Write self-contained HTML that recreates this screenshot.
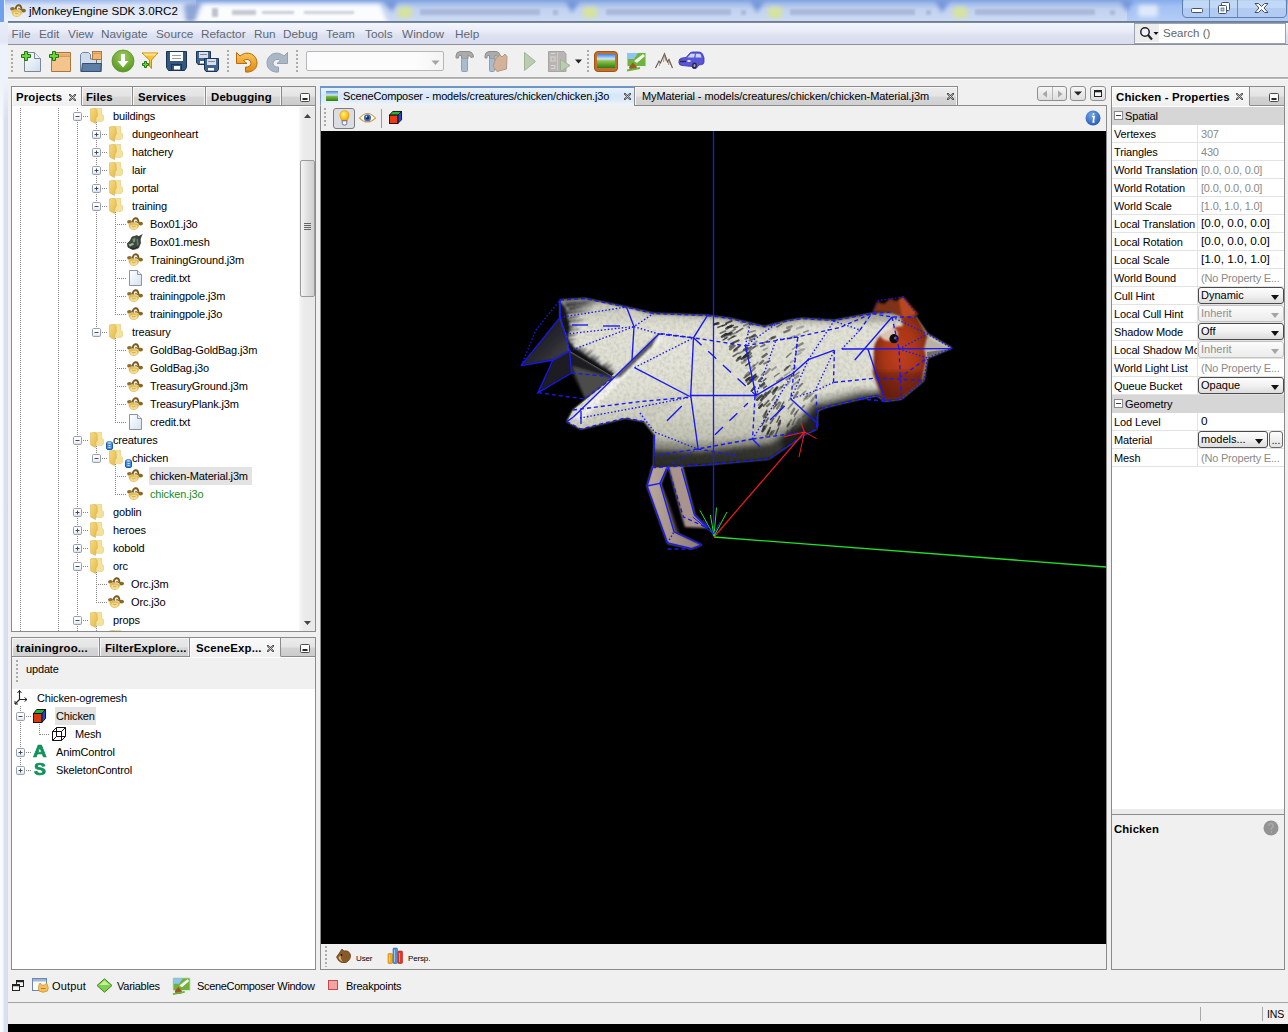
<!DOCTYPE html>
<html><head><meta charset="utf-8"><title>jMonkeyEngine SDK 3.0RC2</title>
<style>
*{box-sizing:border-box;margin:0;padding:0}
html,body{width:1288px;height:1032px;overflow:hidden}
body{position:relative;background:#f0f0f0;font-family:"Liberation Sans",sans-serif;font-size:11px;color:#000;letter-spacing:-0.15px}
.a{position:absolute}
.t{position:absolute;white-space:pre;line-height:14px;height:14px}
.b{font-weight:bold;letter-spacing:0.1px;font-size:11.4px}
svg{position:absolute;overflow:visible}
.panel{position:absolute;border:1px solid #8b8b8b;background:#fff}
.tab{position:absolute;top:0;height:19px;border-right:1px solid #8b8b8b;border-bottom:1px solid #8b8b8b;background:linear-gradient(#e9e9e9 0,#e4e4e4 50%,#d5d5d5 56%,#d1d1d1 100%);box-shadow:inset 1px 1px 0 #f7f7f7,inset -1px 0 0 #f4f4f4}
.tab.sel{background:linear-gradient(#fafafa,#f0f0f0);border-bottom:1px solid #f0f0f0;box-shadow:inset 1px 1px 0 #fff}
.tabrow{position:absolute;left:0;top:0;right:0;height:19px;background:linear-gradient(#ececec 0,#e4e4e4 50%,#d3d3d3 56%,#cccccc 100%);border-bottom:1px solid #8b8b8b}

#wl{left:0;top:22px;width:8px;height:1010px;background:linear-gradient(90deg,#fbfcff 0,#f4f7fd 3px,#dde2f2 4px,#d6dcef 8px)}
#title{left:0;top:0;width:1288px;height:22px;background:linear-gradient(#b9cdeb 0,#c7d7ef 30%,#d4e0f3 70%,#dfe7f5 100%);overflow:hidden}
#title .bl{position:absolute;filter:blur(3px);border-radius:4px}
#tline{left:8px;top:21px;width:1280px;height:2px;background:linear-gradient(#65758c,#8090a6)}
#menu{left:8px;top:23px;width:1280px;height:21px;background:linear-gradient(#f4f6fc 0,#e9ecf7 40%,#dde1f0 60%,#d9ddee 100%)}
#menu .t{top:4px;font-size:11.8px;color:#5f6877;letter-spacing:0;line-height:14px}
#mline{left:8px;top:44px;width:1280px;height:1px;background:#8c909a}
#tbar{left:8px;top:45px;width:1280px;height:33px;background:#f0f0f0}
#tbl1{left:8px;top:77px;width:1280px;height:2px;background:linear-gradient(#a5a5a5,#bdbdbd)}
#tbl2{left:8px;top:79px;width:1280px;height:1px;background:#fbfbfb}
.grip{position:absolute;width:2px;background-image:linear-gradient(#aaa 50%,transparent 50%);background-size:2px 4px}

.vd{position:absolute;width:1px;background-image:linear-gradient(#858585 50%,transparent 50%);background-size:1px 2px}
.hd{position:absolute;height:1px;background-image:linear-gradient(90deg,#858585 50%,transparent 50%);background-size:2px 1px}
#proj .t,#scene .t{font-size:11px}
.tabt{position:absolute;top:3px;white-space:pre;font-weight:bold;font-size:11.4px;letter-spacing:0.15px;line-height:14px}
.sbar{position:absolute;background:linear-gradient(90deg,#f6f6f6,#ebebeb 30%,#e9e9e9)}
.thumb{position:absolute;border:1px solid #9a9a9a;border-radius:2px;background:linear-gradient(90deg,#f4f4f4,#dcdcdc 60%,#cfcfcf)}

#ed{left:320px;top:105px;width:787px;height:865px;border:1px solid #8b8b8b;background:#f0f0f0}
#view{left:321px;top:131px;width:785px;height:813px;background:#000;overflow:hidden}
.etab{position:absolute;top:86px;height:20px;border:1px solid #8b8b8b}
.etxt{position:absolute;top:2px;white-space:pre;font-size:11px;line-height:14px;letter-spacing:-0.16px}
.nbtn{position:absolute;top:86px;height:15px;border:1px solid #8e8e8e;border-radius:3px;background:linear-gradient(#f6f6f6,#dedede)}

#props .pn{position:absolute;left:2px;white-space:pre;font-size:11px;line-height:14px;width:83px;overflow:hidden;letter-spacing:-0.12px;height:14px}
#props .pv{position:absolute;left:89px;white-space:pre;font-size:11px;line-height:14px;color:#8a8a8a;letter-spacing:-0.2px}
#props .pv.e{color:#000;font-size:11.8px;letter-spacing:0;left:89px}
#props .ln{position:absolute;left:0;width:172px;height:1px;background:#e2e2e2}
.cmb{position:absolute;left:86px;width:86px;height:17px;border:1px solid #4a4a4a;border-radius:3px;background:linear-gradient(#fdfdfd 0,#f1f1f1 50%,#dcdcdc 100%);font-size:11px;line-height:14px;padding-left:2px;white-space:pre;letter-spacing:0;overflow:hidden}
.cmb.dis{border-color:#c2c2c2;color:#8e8e8e;background:linear-gradient(#fbfbfb,#ececec)}
.cmb i{position:absolute;right:4px;top:7px;width:0;height:0;border:4px solid transparent;border-top:5px solid #111;border-bottom:0}
.cmb.dis i{border-top-color:#a5a5a5}

#bline{left:8px;top:1002px;width:1280px;height:1px;background:#a3a3a3}
#bblack{left:8px;top:1024px;width:1280px;height:8px;background:#000}
.bt{position:absolute;white-space:pre;font-size:11px;top:979px;line-height:14px;letter-spacing:-0.25px}
</style></head>
<body>
<svg width="0" height="0" style="position:absolute">
<defs>
<linearGradient id="gFold" x1="0" y1="0" x2="1" y2="1"><stop offset="0" stop-color="#f6dc80"/><stop offset="1" stop-color="#e4b848"/></linearGradient>
<linearGradient id="gBox" x1="0" y1="0" x2="0" y2="1"><stop offset="0.5" stop-color="#ffffff"/><stop offset="1" stop-color="#d9dde4"/></linearGradient><linearGradient id="gFold2" x1="0" y1="0" x2="0" y2="1"><stop offset="0" stop-color="#fff3c0"/><stop offset="1" stop-color="#f1cf6a"/></linearGradient>
<linearGradient id="gPage" x1="0" y1="0" x2="1" y2="1"><stop offset="0" stop-color="#ffffff"/><stop offset="1" stop-color="#d5e2f1"/></linearGradient>
<radialGradient id="gMonk" cx="0.45" cy="0.4" r="0.6"><stop offset="0" stop-color="#f6d873"/><stop offset="1" stop-color="#c98d2a"/></radialGradient>
<symbol id="folder" viewBox="0 0 14 16">
  <path d="M5 0.400 L11.500 0.300 L11.800 6 L13.800 8 L13.600 12 L12 13.600 L6 13.200Z" fill="#f5e29a" stroke="#dcc06a" stroke-width="0.500"/>
  <path d="M0.300 1 L4.500 0.300 L7 2 L7.400 8 L5.900 10 L5.500 15.600 L0.700 13Z" fill="url(#gFold)" stroke="#d0a844" stroke-width="0.500"/>
</symbol>
<symbol id="page" viewBox="0 0 16 16">
  <path d="M2.5 0.5 L10.5 0.5 L14.5 4.5 L14.5 15.5 L2.5 15.5Z" fill="url(#gPage)" stroke="#8a94a3" stroke-width="1"/>
  <path d="M10.5 0.5 L10.5 4.5 L14.5 4.5" fill="#eef3f9" stroke="#8a94a3" stroke-width="1"/>
</symbol>
<symbol id="monkey" viewBox="0 0 16 13">
  <ellipse cx="2.5" cy="4.8" rx="2.4" ry="1.9" fill="#8c6c34"/>
  <ellipse cx="13.6" cy="6.6" rx="2.4" ry="1.9" fill="#8a6626"/>
  <path d="M4.8 5.5 C4.8 1.8 7 0.3 8.8 0.3 C11 0.3 12.6 2.2 12.4 6 Z" fill="#7a5a22"/>
  <ellipse cx="8.6" cy="4.2" rx="1.7" ry="2" fill="#fdf8e4"/>
  <ellipse cx="9" cy="4.7" rx="0.7" ry="1" fill="#5a4018"/>
  <path d="M1.6 7 C1.8 5.5 4 5.6 6.5 6 C9 6.2 11.5 6.2 12 7.6 C12.4 10.5 9.8 12.9 6.8 12.9 C3.8 12.9 1.3 10.2 1.6 7Z" fill="#e3bd4e"/>
  <ellipse cx="6.8" cy="10" rx="3.6" ry="2.3" fill="#f0da96"/>
  <path d="M5 9.200 Q6.800 10 8.600 9.200" stroke="#b48a30" stroke-width="0.600" fill="none"/>
</symbol>
<symbol id="meshico" viewBox="0 0 16 16">
  <path d="M11.3 2.200 L15.800 0.100 L13.300 5.500Z" fill="#3c4a3e"/>
  <path d="M5 3 L10 1.500 L13 3.500 L13.600 9 L11.500 14 L6 15.800 L1 13.200 L0.200 9.500 L3 7Z" fill="#3a473b" stroke="#232c24" stroke-width="0.600"/>
  <path d="M1.500 10.500 L6 8.700 L7 10.500 L3 12.500Z" fill="#a9bca6" opacity="0.900"/>
  <path d="M5.500 5 L8.500 3.500 L8 8 L6 8.200Z" fill="#7c8f7c"/>
  <path d="M9.500 5 L11 4.500 L11.500 11 L10 12Z" fill="#67786a"/>
  <path d="M3 14 L8 14.500 L11 12.500" stroke="#1a211b" stroke-width="0.800" fill="none"/>
</symbol>
<symbol id="plusbox" viewBox="0 0 9 9">
  <rect x="0.5" y="0.5" width="8" height="8" rx="1.2" fill="url(#gBox)" stroke="#979fad"/>
  <path d="M2.5 4.5H6.5M4.5 2.5V6.5" stroke="#3b4a6b" stroke-width="1"/>
</symbol>
<symbol id="minusbox" viewBox="0 0 9 9">
  <rect x="0.5" y="0.5" width="8" height="8" rx="1.2" fill="url(#gBox)" stroke="#979fad"/>
  <path d="M2.5 4.5H6.5" stroke="#3b4a6b" stroke-width="1"/>
</symbol>
<symbol id="closex" viewBox="0 0 8 8">
  <path d="M1 1 L7 7 M7 1 L1 7" stroke="#4a4a4a" stroke-width="2.400" stroke-linecap="round"/>
  <path d="M1.500 1.500 L6.500 6.500 M6.500 1.500 L1.500 6.500" stroke="#f4f4f4" stroke-width="0.700"/>
</symbol>
<symbol id="minbtn" viewBox="0 0 10 9">
  <rect x="0.5" y="0.5" width="9" height="8" rx="1" fill="#fafafa" stroke="#4a4a4a"/>
  <rect x="2.5" y="5" width="5" height="2" fill="#2a2a2a"/>
</symbol>
</defs></svg>
<div class="a" id="title">
<svg style="left:0;top:0" width="1288" height="22" viewBox="0 0 1288 22">
<defs><linearGradient id="tg0" x1="0" y1="0" x2="0" y2="1"><stop offset="0" stop-color="#7fa2e0"/><stop offset="0.18" stop-color="#a4bdea"/><stop offset="0.4" stop-color="#c0d1f0"/><stop offset="1" stop-color="#cedbf3"/></linearGradient>
<linearGradient id="tg1" x1="0" y1="0" x2="0" y2="1"><stop offset="0" stop-color="#9dbaee"/><stop offset="0.25" stop-color="#d9e3f6"/><stop offset="1" stop-color="#eef2fb"/></linearGradient>
<linearGradient id="tg2" x1="0" y1="0" x2="0" y2="1"><stop offset="0" stop-color="#86abec"/><stop offset="0.3" stop-color="#a3c1f3"/><stop offset="1" stop-color="#b4cdf6"/></linearGradient>
<filter id="tbl"><feGaussianBlur stdDeviation="2.2"/></filter><filter id="tbl2"><feGaussianBlur stdDeviation="1.2"/></filter></defs>
<rect width="1288" height="22" fill="url(#tg0)"/>
<rect x="0" y="0" width="196" height="22" fill="url(#tg1)"/>
<rect x="1127" y="0" width="161" height="22" fill="url(#tg2)"/>
<g filter="url(#tbl)">
<path d="M184 4 L200 2 L196 22 L186 22Z" fill="#8ea6d6"/>
<path d="M203 4 H380 L388 24 H194Z" fill="#fbfcfe"/>
<path d="M383 0 L398 0 L392 12Z M565 0 L580 0 L572 13Z M750 0 L765 0 L757 13Z M935 0 L950 0 L942 13Z M1120 0 L1134 0 L1127 12Z" fill="#7496da"/>
<rect x="398" y="7" width="14" height="11" rx="3" fill="#d6e39c"/><rect x="583" y="7" width="14" height="11" rx="3" fill="#d6e39c"/><rect x="768" y="7" width="14" height="11" rx="3" fill="#d6e39c"/><rect x="953" y="7" width="14" height="11" rx="3" fill="#d6e39c"/>
<rect x="1138" y="5" width="20" height="12" rx="3" fill="#dfe9fb"/>
</g>
<g filter="url(#tbl2)" fill="#aab9da">
<rect x="232" y="10" width="24" height="5" fill="#c6c9d2"/><rect x="262" y="11" width="32" height="3" fill="#c9ccd6"/><rect x="304" y="11" width="50" height="3" fill="#cdd0d8"/><rect x="212" y="8" width="6" height="9" fill="#c0c3cc"/>
<rect x="420" y="9" width="120" height="6"/><rect x="553" y="10" width="5" height="5"/>
<rect x="606" y="9" width="125" height="6"/><rect x="741" y="10" width="5" height="5"/>
<rect x="790" y="9" width="125" height="6"/><rect x="926" y="10" width="5" height="5"/>
<rect x="975" y="9" width="120" height="6"/><rect x="1110" y="10" width="5" height="5"/>
</g>
<rect x="0" y="0" width="4" height="22" fill="#6fa2ee"/><rect x="4" y="0" width="1" height="22" fill="#e8f0fc"/>
</svg>
</div>
<div class="a" id="wl"></div><div class="a" style="left:0;top:22px;width:8px;height:100px;background:linear-gradient(#e9edf9 0,#e3e7f5 20px,#eef2fa 24px,#eef2fa 60px,rgba(238,242,250,0) 100px)"></div>
<svg style="left:10px;top:4px" width="16" height="13"><use href="#monkey"/></svg>
<div class="t" style="left:29px;top:4px;font-size:11.6px;letter-spacing:0;color:#000">jMonkeyEngine SDK 3.0RC2</div>
<svg style="left:1182px;top:0" width="105" height="18" viewBox="0 0 105 18">
<path d="M0.500 0 V13 Q0.500 17.500 5 17.500 H100 Q104.500 17.500 104.500 13 V0Z" fill="#b2cbf3" stroke="#5f7fae"/>
<path d="M1.500 0 V8 H103.500 V0Z" fill="#c6dbf8" opacity="0.800"/>
<path d="M27.500 0V17M55.500 0V17" stroke="#6f8cb8"/>
<rect x="9.500" y="8.500" width="11" height="4" rx="1" fill="#fff" stroke="#44506a"/>
<rect x="39.500" y="2.500" width="8" height="8" rx="1" fill="#fff" stroke="#44506a"/><rect x="36.500" y="5.500" width="8" height="8" rx="1" fill="#fff" stroke="#44506a"/><rect x="39" y="8" width="3" height="3" fill="#b5cdf2" stroke="#44506a" stroke-width="0.600"/>
<path d="M73 3.500 L76.500 3.500 L79.500 6.500 L82.500 3.500 L86 3.500 L82 8 L86 12.500 L82.500 12.500 L79.500 9.500 L76.500 12.500 L73 12.500 L77 8Z" fill="#fff" stroke="#44506a"/>
</svg>
<div class="a" id="tline"></div>
<div class="a" id="menu">
<div class="t" style="left:3.5px">File</div>
<div class="t" style="left:31px">Edit</div>
<div class="t" style="left:60px">View</div>
<div class="t" style="left:93px">Navigate</div>
<div class="t" style="left:148px">Source</div>
<div class="t" style="left:193px">Refactor</div>
<div class="t" style="left:246px">Run</div>
<div class="t" style="left:275px">Debug</div>
<div class="t" style="left:318px">Team</div>
<div class="t" style="left:357px">Tools</div>
<div class="t" style="left:394px">Window</div>
<div class="t" style="left:447px">Help</div>
</div>
<div class="a" style="left:1134px;top:23px;width:152px;height:21px;border:1px solid #9aa3b5;background:#fff">
<div class="a" style="left:0;top:0;width:24px;height:18px;background:#ececec"></div>
<svg style="left:4px;top:2px" width="20" height="15" viewBox="0 0 20 15"><circle cx="6" cy="6" r="4.200" fill="#eef4fb" stroke="#222" stroke-width="1.500"/><path d="M9 9 L13 13.500" stroke="#222" stroke-width="2.200"/><path d="M14.500 6 H19.500 L17 9Z" fill="#111"/></svg>
<div class="t" style="left:28px;top:2px;font-size:11.5px;color:#666;letter-spacing:0">Search ()</div></div>
<div class="a" id="mline"></div><div class="a" id="tbar"></div><div class="a" id="tbl1"></div><div class="a" id="tbl2"></div>
<div class="grip" style="left:11px;top:50px;height:23px"></div>
<div class="grip" style="left:227px;top:50px;height:23px"></div>
<div class="grip" style="left:296px;top:50px;height:23px"></div>
<div class="grip" style="left:587px;top:50px;height:23px"></div>

<svg style="left:20px;top:50px" width="24" height="24" viewBox="0 0 24 24">
 <defs><linearGradient id="tgp" x1="0" y1="0" x2="1" y2="1"><stop offset="0" stop-color="#fff"/><stop offset="1" stop-color="#cfdcec"/></linearGradient></defs>
 <path d="M4.500 2.500 H14.500 L20.500 8.500 V21.500 H4.500Z" fill="url(#tgp)" stroke="#7d8794"/>
 <path d="M14.500 2.500 V8.500 H20.500" fill="#e9eff7" stroke="#7d8794"/>
 <path d="M4.500 1.500 H7.500 V4.500 H10.500 V7.500 H7.500 V10.500 H4.500 V7.500 H1.500 V4.500 H4.500Z" fill="#6fd23c" stroke="#1f7a12"/>
</svg>
<svg style="left:48px;top:50px" width="24" height="24" viewBox="0 0 24 24">
 <path d="M3.500 4.500 L5.500 2.500 H22.500 V21.500 H3.500Z" fill="#f3c48d" stroke="#a8763f"/>
 <path d="M3.500 6.500 H22.500" stroke="#d59a58" />
 <path d="M4 3.500 H22 V6 H4Z" fill="#e9ae6c"/>
 <path d="M4.500 1.500 H7.500 V4.500 H10.500 V7.500 H7.500 V10.500 H4.500 V7.500 H1.500 V4.500 H4.500Z" fill="#6fd23c" stroke="#1f7a12"/>
</svg>
<svg style="left:79px;top:50px" width="24" height="24" viewBox="0 0 24 24">
 <path d="M1.500 21.500 V4.500 L3.500 2.500 H9.500 L11.500 4.500 V9 H22.500 V21.500Z" fill="#cfdcea" stroke="#6e86a2"/>
 <rect x="13.500" y="1.500" width="9" height="8" fill="#f0b672" stroke="#a8763f"/>
 <path d="M13.500 3.500 H22.500" stroke="#d59a58"/>
 <path d="M3.500 13.500 H22.500 L21.500 21.500 H2.500Z" fill="#5c7ea5" stroke="#35506f"/>
 <path d="M17.500 9.500 V13" stroke="#6e6e6e"/>
</svg>
<svg style="left:111px;top:49px" width="24" height="24" viewBox="0 0 24 24">
 <defs><radialGradient id="tgd" cx="0.5" cy="0.3" r="0.8"><stop offset="0" stop-color="#9ccb5a"/><stop offset="1" stop-color="#4f8f1c"/></radialGradient></defs>
 <circle cx="12" cy="12" r="11" fill="url(#tgd)" stroke="#5c9628" stroke-width="0.8"/>
 <path d="M10 5 H14 V12 H17.500 L12 18.500 L6.500 12 H10Z" fill="#fff"/>
</svg>
<svg style="left:140px;top:51px" width="20" height="20" viewBox="0 0 20 20">
 <path d="M2 2 H18 L11.500 9 V17.500 L9.500 15 V9Z" fill="#f6c435" stroke="#c98a10"/>
 <path d="M3 2.500 H17 L15 4.500 H5Z" fill="#fbe38a"/>
 <path d="M4.500 10.500 H6.500 V12.500 H8.500 V14.500 H6.500 V16.500 H4.500 V14.500 H2.500 V12.500 H4.500Z" fill="#6fd23c" stroke="#1f7a12"/>
</svg>
<svg style="left:165px;top:50px" width="24" height="22" viewBox="0 0 24 22">
 <path d="M1.500 1.500 H21.500 V17.500 L19.500 20.500 H3.500 L1.500 17.500Z" fill="#35577f" stroke="#1c3454"/>
 <rect x="5" y="2" width="13" height="9" fill="#fff"/>
 <path d="M7 5.500 H16 M7 8.500 H16" stroke="#9a9a9a"/>
 <rect x="6.500" y="14.500" width="10" height="6" fill="#35577f" stroke="#1c3454"/>
 <rect x="9" y="16" width="6" height="3.500" fill="#fff"/>
</svg>
<svg style="left:195px;top:50px" width="24" height="24" viewBox="0 0 24 24">
 <g><path d="M1.500 1.500 H15.500 V12.500 L14 14.500 H3 L1.500 12.500Z" fill="#41648f" stroke="#1c3454"/><rect x="4" y="2" width="9" height="6" fill="#d7e0ec"/><path d="M5 4.500H12" stroke="#889"/><rect x="5" y="11" width="6" height="2.500" fill="#fff"/></g>
 <g transform="translate(8,7)"><path d="M1.500 1.500 H15.500 V12.500 L14 14.500 H3 L1.500 12.500Z" fill="#41648f" stroke="#1c3454"/><rect x="4" y="2" width="9" height="6" fill="#d7e0ec"/><path d="M5 4.500H12" stroke="#889"/><rect x="5" y="11" width="6" height="2.500" fill="#fff"/></g>
</svg>
<svg style="left:235px;top:51px" width="24" height="22" viewBox="0 0 24 22">
 <defs><linearGradient id="tgu" x1="0" y1="0" x2="0" y2="1"><stop offset="0" stop-color="#f9c65a"/><stop offset="1" stop-color="#e08a12"/></linearGradient></defs>
 <path d="M1.500 1.500 V12.500 H12 L8.500 9.500 Q10.500 8 13 8.500 Q16 9.500 16 12.500 Q16 15.500 12.500 16 L10.500 16 L10.500 21 Q14 21.500 17 20 Q22 17.500 22 12 Q22 6 16.500 3 Q10.500 0.500 5 5 Z" fill="url(#tgu)" stroke="#b86c0e"/>
</svg>
<svg style="left:265px;top:51px" width="24" height="22" viewBox="0 0 24 22">
 <path transform="translate(24,0) scale(-1,1)" d="M1.500 1.500 V12.500 H12 L8.500 9.500 Q10.500 8 13 8.500 Q16 9.500 16 12.500 Q16 15.500 12.500 16 L10.500 16 L10.500 21 Q14 21.500 17 20 Q22 17.500 22 12 Q22 6 16.500 3 Q10.500 0.500 5 5 Z" fill="#a9b7c6" stroke="#93a2b3"/>
</svg>
<div class="a" style="left:306px;top:51px;width:138px;height:20px;border:1px solid #b4b8be;border-radius:2px;background:linear-gradient(90deg,#fcfcfc 80%,#f3f3f3)"></div>
<svg style="left:431px;top:60px" width="9" height="6" viewBox="0 0 9 6"><path d="M0.500 0.500 H8.500 L4.500 5Z" fill="#a4a4a4"/></svg>
<svg style="left:454px;top:50px" width="22" height="24" viewBox="0 0 22 24">
 <path d="M2 6 Q2 2 6 1.500 H15 Q19 2 19.500 7 L17 7.500 Q16.500 5.500 14 5.500 V8.500 H7.500 V5.500 H5.500 Q4.500 6 4.500 8 L2 8Z" fill="#ababab" stroke="#8d8d8d"/>
 <rect x="7.500" y="8.500" width="6" height="13" rx="1" fill="#a9bccd" stroke="#8ea1b3"/>
</svg>
<svg style="left:483px;top:50px" width="26" height="24" viewBox="0 0 26 24">
 <path d="M2 6 Q2 2 6 1.500 H13 Q17 2 17.500 7 L15 7.500 Q14.500 5.500 12 5.500 V8.500 H6.500 V5.500 H4.500 Q4 6 4 8 L2 8Z" fill="#ababab" stroke="#8d8d8d"/>
 <rect x="6.500" y="8.500" width="5" height="13" rx="1" fill="#a9bccd" stroke="#8ea1b3"/>
 <path d="M13 8 L17 5 L19 7 L22 4 L24 6.500 L23.500 19 L14 21.500 L10 16Z" fill="#d3b29a" stroke="#b39783"/>
</svg>
<svg style="left:523px;top:51px" width="14" height="22" viewBox="0 0 14 22"><path d="M1.500 1.500 L12.500 10.500 L1.500 19.500Z" fill="#b9cdb1" stroke="#9fb397"/></svg>
<svg style="left:547px;top:50px" width="26" height="24" viewBox="0 0 26 24">
 <path d="M1.500 1.500 H17 L19 4 V21.500 H1.500Z" fill="#b9b5b3" stroke="#a7a3a1"/>
 <path d="M10.500 2 V21" stroke="#cfcbca"/>
 <rect x="4" y="7" width="4" height="4" fill="none" stroke="#d9d6d5"/><path d="M4 3.500h4M4 15.500h4v3h-4" stroke="#d9d6d5" fill="none"/>
 <path d="M13.500 9.500 L23 15.500 L13.500 21.500Z" fill="#b9cdb1" stroke="#9fb397"/>
</svg>
<svg style="left:575px;top:59px" width="7" height="5" viewBox="0 0 7 5"><path d="M0 0.500 H7 L3.500 4.500Z" fill="#222"/></svg>
<svg style="left:594px;top:51px" width="24" height="21" viewBox="0 0 24 21">
 <defs><linearGradient id="tgs" x1="0" y1="0" x2="0" y2="1"><stop offset="0" stop-color="#3f7fe0"/><stop offset="0.35" stop-color="#cfe4fb"/><stop offset="0.5" stop-color="#8fc24a"/><stop offset="1" stop-color="#2f7d12"/></linearGradient></defs>
 <rect x="0.500" y="0.500" width="23" height="20" rx="3.500" fill="#c0702a" stroke="#9d5618"/>
 <rect x="3" y="3" width="18" height="14" fill="url(#tgs)"/>
</svg>
<svg style="left:626px;top:51px" width="22" height="21" viewBox="0 0 22 21">
 <rect x="1" y="1.500" width="19" height="14" rx="1" fill="#6fb23c" stroke="#e8f0e8"/>
 <path d="M1.500 2 H12 L8 8 H1.500Z" fill="#8ec5f0"/>
 <path d="M8 10 L17 3 L19 5 L11 12Z" fill="#f4f6ee"/>
 <path d="M3 16 L7 11.500 L11 16 L10 19 H4Z" fill="#9a5a28"/>
 <path d="M1 19.500 L14 17 " stroke="#6fb23c" stroke-width="2"/>
</svg>
<svg style="left:655px;top:53px" width="18" height="16" viewBox="0 0 18 16">
 <path d="M0.500 15 L4 8 L5.500 10 L9.500 0.800 L12.500 9 L14 6.500 L17.500 15" fill="none" stroke="#6a5648" stroke-width="1.100"/>
 <path d="M9.500 1 L8.500 9 M9.500 1 L11 8 M4 8 L4.500 13 M14 6.500 L13.500 12 M14 6.500 L15.500 12" stroke="#8a7668" stroke-width="0.700" fill="none"/>
</svg>
<svg style="left:678px;top:51px" width="27" height="19" viewBox="0 0 27 19">
 <path d="M1 10 Q1 7.500 4 7 L8 6.500 L12 2 Q13 1 15 1 H21 Q23.500 1 24.500 3 L26 7 V11 Q26 13 24 13.500 L21 14 L18 17.500 H15 L14 15.500 L4 14.500 Q1 14 1 12Z" fill="#5a55d8" stroke="#3b379f" stroke-width="0.800"/>
 <path d="M9.500 6.500 L12.800 2.800 H17 L16 6.500Z M18 2.800 H21.500 Q22.500 3 23 4.500 L23.500 6.500 H17.500Z" fill="#c9d7f6"/>
 <ellipse cx="16.500" cy="14.500" rx="2.300" ry="3" fill="#2a2840"/><ellipse cx="16.500" cy="14.500" rx="1" ry="1.500" fill="#aab"/>
 <path d="M2 10.500 H8" stroke="#2a2840" stroke-width="1.400"/><ellipse cx="11" cy="10" rx="1.800" ry="1" fill="#e8eefc"/>
</svg>
<div class="panel" id="proj" style="left:11px;top:86px;width:305px;height:546px">
<div class="tabrow"></div>
<div class="tab sel" style="left:0px;width:70px"><div class="tabt" style="left:4px">Projects</div></div>
<div class="tab" style="left:70px;width:51px"><div class="tabt" style="left:4px">Files</div></div>
<div class="tab" style="left:121px;width:73px"><div class="tabt" style="left:5px">Services</div></div>
<div class="tab" style="left:194px;width:76px"><div class="tabt" style="left:5px">Debugging</div></div>
<svg style="left:57px;top:7px" width="7" height="7"><use href="#closex"/></svg>
<svg style="left:288px;top:6px" width="10" height="9"><use href="#minbtn"/></svg>
<div class="a" style="left:0;top:20px;width:287px;height:524px;overflow:hidden">
<div class="vd" style="left:8px;top:1px;height:524px"></div>
<div class="vd" style="left:46px;top:1px;height:524px"></div>
<div class="vd" style="left:65px;top:1px;height:524px"></div>
<div class="vd" style="left:84px;top:15px;height:211px"></div>
<div class="vd" style="left:84px;top:339px;height:13px"></div>
<div class="vd" style="left:84px;top:465px;height:31px"></div>
<div class="vd" style="left:84px;top:519px;height:6px"></div>
<div class="vd" style="left:103px;top:105px;height:103px"></div>
<div class="vd" style="left:103px;top:231px;height:85px"></div>
<div class="vd" style="left:103px;top:357px;height:31px"></div>
<svg style="left:61px;top:5px" width="9" height="9"><use href="#minusbox"/></svg>
<div class="hd" style="left:71px;top:9px;width:6px"></div>
<svg style="left:78px;top:1px" width="14" height="16"><use href="#folder"/></svg>
<div class="t" style="left:101px;top:2px;">buildings</div>
<svg style="left:80px;top:23px" width="9" height="9"><use href="#plusbox"/></svg>
<div class="hd" style="left:90px;top:27px;width:6px"></div>
<svg style="left:97px;top:19px" width="14" height="16"><use href="#folder"/></svg>
<div class="t" style="left:120px;top:20px;">dungeonheart</div>
<svg style="left:80px;top:41px" width="9" height="9"><use href="#plusbox"/></svg>
<div class="hd" style="left:90px;top:45px;width:6px"></div>
<svg style="left:97px;top:37px" width="14" height="16"><use href="#folder"/></svg>
<div class="t" style="left:120px;top:38px;">hatchery</div>
<svg style="left:80px;top:59px" width="9" height="9"><use href="#plusbox"/></svg>
<div class="hd" style="left:90px;top:63px;width:6px"></div>
<svg style="left:97px;top:55px" width="14" height="16"><use href="#folder"/></svg>
<div class="t" style="left:120px;top:56px;">lair</div>
<svg style="left:80px;top:77px" width="9" height="9"><use href="#plusbox"/></svg>
<div class="hd" style="left:90px;top:81px;width:6px"></div>
<svg style="left:97px;top:73px" width="14" height="16"><use href="#folder"/></svg>
<div class="t" style="left:120px;top:74px;">portal</div>
<svg style="left:80px;top:95px" width="9" height="9"><use href="#minusbox"/></svg>
<div class="hd" style="left:90px;top:99px;width:6px"></div>
<svg style="left:97px;top:91px" width="14" height="16"><use href="#folder"/></svg>
<div class="t" style="left:120px;top:92px;">training</div>
<div class="hd" style="left:105px;top:117px;width:10px"></div>
<svg style="left:115px;top:110px" width="16" height="13"><use href="#monkey"/></svg>
<div class="t" style="left:138px;top:110px;">Box01.j3o</div>
<div class="hd" style="left:105px;top:135px;width:10px"></div>
<svg style="left:115px;top:127px" width="16" height="16"><use href="#meshico"/></svg>
<div class="t" style="left:138px;top:128px;">Box01.mesh</div>
<div class="hd" style="left:105px;top:153px;width:10px"></div>
<svg style="left:115px;top:146px" width="16" height="13"><use href="#monkey"/></svg>
<div class="t" style="left:138px;top:146px;">TrainingGround.j3m</div>
<div class="hd" style="left:105px;top:171px;width:10px"></div>
<svg style="left:115px;top:163px" width="16" height="16"><use href="#page"/></svg>
<div class="t" style="left:138px;top:164px;">credit.txt</div>
<div class="hd" style="left:105px;top:189px;width:10px"></div>
<svg style="left:115px;top:182px" width="16" height="13"><use href="#monkey"/></svg>
<div class="t" style="left:138px;top:182px;">trainingpole.j3m</div>
<div class="hd" style="left:105px;top:207px;width:10px"></div>
<svg style="left:115px;top:200px" width="16" height="13"><use href="#monkey"/></svg>
<div class="t" style="left:138px;top:200px;">trainingpole.j3o</div>
<svg style="left:80px;top:221px" width="9" height="9"><use href="#minusbox"/></svg>
<div class="hd" style="left:90px;top:225px;width:6px"></div>
<svg style="left:97px;top:217px" width="14" height="16"><use href="#folder"/></svg>
<div class="t" style="left:120px;top:218px;">treasury</div>
<div class="hd" style="left:105px;top:243px;width:10px"></div>
<svg style="left:115px;top:236px" width="16" height="13"><use href="#monkey"/></svg>
<div class="t" style="left:138px;top:236px;">GoldBag-GoldBag.j3m</div>
<div class="hd" style="left:105px;top:261px;width:10px"></div>
<svg style="left:115px;top:254px" width="16" height="13"><use href="#monkey"/></svg>
<div class="t" style="left:138px;top:254px;">GoldBag.j3o</div>
<div class="hd" style="left:105px;top:279px;width:10px"></div>
<svg style="left:115px;top:272px" width="16" height="13"><use href="#monkey"/></svg>
<div class="t" style="left:138px;top:272px;">TreasuryGround.j3m</div>
<div class="hd" style="left:105px;top:297px;width:10px"></div>
<svg style="left:115px;top:290px" width="16" height="13"><use href="#monkey"/></svg>
<div class="t" style="left:138px;top:290px;">TreasuryPlank.j3m</div>
<div class="hd" style="left:105px;top:315px;width:10px"></div>
<svg style="left:115px;top:307px" width="16" height="16"><use href="#page"/></svg>
<div class="t" style="left:138px;top:308px;">credit.txt</div>
<svg style="left:61px;top:329px" width="9" height="9"><use href="#minusbox"/></svg>
<div class="hd" style="left:71px;top:333px;width:6px"></div>
<svg style="left:78px;top:325px" width="14" height="16"><use href="#folder"/></svg>
<svg style="left:94px;top:334px" width="7" height="9" viewBox="0 0 7 9"><rect x="0.500" y="1" width="6" height="7.500" rx="1.500" fill="#3d8fe0" stroke="#1c5aa6"/><ellipse cx="3.500" cy="2" rx="2.500" ry="1.200" fill="#bfe0ff" stroke="#1c5aa6" stroke-width="0.600"/><path d="M2.500 4.500H4.500M2.500 6.500H4.500" stroke="#fff" stroke-width="0.800"/></svg>
<div class="t" style="left:101px;top:326px;">creatures</div>
<svg style="left:80px;top:347px" width="9" height="9"><use href="#minusbox"/></svg>
<div class="hd" style="left:90px;top:351px;width:6px"></div>
<svg style="left:97px;top:343px" width="14" height="16"><use href="#folder"/></svg>
<svg style="left:113px;top:352px" width="7" height="9" viewBox="0 0 7 9"><rect x="0.500" y="1" width="6" height="7.500" rx="1.500" fill="#3d8fe0" stroke="#1c5aa6"/><ellipse cx="3.500" cy="2" rx="2.500" ry="1.200" fill="#bfe0ff" stroke="#1c5aa6" stroke-width="0.600"/><path d="M2.500 4.500H4.500M2.500 6.500H4.500" stroke="#fff" stroke-width="0.800"/></svg>
<div class="t" style="left:120px;top:344px;">chicken</div>
<div class="hd" style="left:105px;top:369px;width:10px"></div>
<svg style="left:115px;top:362px" width="16" height="13"><use href="#monkey"/></svg>
<div class="a" style="left:137px;top:360px;width:103px;height:18px;background:#e3e3e3"></div>
<div class="t" style="left:138px;top:362px;">chicken-Material.j3m</div>
<div class="hd" style="left:105px;top:387px;width:10px"></div>
<svg style="left:115px;top:380px" width="16" height="13"><use href="#monkey"/></svg>
<div class="t" style="left:138px;top:380px;color:#1a8a1a;">chicken.j3o</div>
<svg style="left:61px;top:401px" width="9" height="9"><use href="#plusbox"/></svg>
<div class="hd" style="left:71px;top:405px;width:6px"></div>
<svg style="left:78px;top:397px" width="14" height="16"><use href="#folder"/></svg>
<div class="t" style="left:101px;top:398px;">goblin</div>
<svg style="left:61px;top:419px" width="9" height="9"><use href="#plusbox"/></svg>
<div class="hd" style="left:71px;top:423px;width:6px"></div>
<svg style="left:78px;top:415px" width="14" height="16"><use href="#folder"/></svg>
<div class="t" style="left:101px;top:416px;">heroes</div>
<svg style="left:61px;top:437px" width="9" height="9"><use href="#plusbox"/></svg>
<div class="hd" style="left:71px;top:441px;width:6px"></div>
<svg style="left:78px;top:433px" width="14" height="16"><use href="#folder"/></svg>
<div class="t" style="left:101px;top:434px;">kobold</div>
<svg style="left:61px;top:455px" width="9" height="9"><use href="#minusbox"/></svg>
<div class="hd" style="left:71px;top:459px;width:6px"></div>
<svg style="left:78px;top:451px" width="14" height="16"><use href="#folder"/></svg>
<div class="t" style="left:101px;top:452px;">orc</div>
<div class="hd" style="left:86px;top:477px;width:10px"></div>
<svg style="left:96px;top:470px" width="16" height="13"><use href="#monkey"/></svg>
<div class="t" style="left:119px;top:470px;">Orc.j3m</div>
<div class="hd" style="left:86px;top:495px;width:10px"></div>
<svg style="left:96px;top:488px" width="16" height="13"><use href="#monkey"/></svg>
<div class="t" style="left:119px;top:488px;">Orc.j3o</div>
<svg style="left:61px;top:509px" width="9" height="9"><use href="#minusbox"/></svg>
<div class="hd" style="left:71px;top:513px;width:6px"></div>
<svg style="left:78px;top:505px" width="14" height="16"><use href="#folder"/></svg>
<div class="t" style="left:101px;top:506px;">props</div>
<div class="hd" style="left:86px;top:531px;width:10px"></div>
<svg style="left:97px;top:523px" width="14" height="16"><use href="#folder"/></svg>
</div>
<div class="sbar" style="left:287px;top:20px;width:16px;height:524px"></div>
<svg style="left:292px;top:27px" width="7" height="4" viewBox="0 0 7 4"><path d="M0 4 L3.500 0 L7 4Z" fill="#444"/></svg>
<svg style="left:292px;top:534px" width="7" height="4" viewBox="0 0 7 4"><path d="M0 0 L3.500 4 L7 0Z" fill="#444"/></svg>
<div class="thumb" style="left:288px;top:73px;width:15px;height:137px"></div>
<div class="a" style="left:292px;top:136px;width:7px;height:7px;background-image:linear-gradient(#666 50%,transparent 50%);background-size:7px 2px"></div>
</div>
<div class="panel" id="scene" style="left:11px;top:637px;width:305px;height:333px">
<div class="tabrow"></div>
<div class="tab" style="left:0px;width:88px"><div class="tabt" style="left:4px">trainingroo...</div></div>
<div class="tab" style="left:88px;width:90px"><div class="tabt" style="left:5px">FilterExplore...</div></div>
<div class="tab sel" style="left:178px;width:91px"><div class="tabt" style="left:6px">SceneExp...</div></div>
<svg style="left:255px;top:7px" width="7" height="7"><use href="#closex"/></svg>
<svg style="left:288px;top:6px" width="10" height="9"><use href="#minbtn"/></svg>
<div class="a" style="left:0;top:20px;width:303px;height:31px;background:#f0f0f0"></div>
<div class="grip" style="left:4px;top:22px;height:22px;width:2px"></div>
<div class="t" style="left:14px;top:24px">update</div>
<div class="vd" style="left:8px;top:68px;height:60px"></div>
<svg style="left:2px;top:52px" width="14" height="15" viewBox="0 0 14 15"><path d="M5.500 0.500 V9.500 H13 M5.500 9.500 L1 14" fill="none" stroke="#222" stroke-width="1.100"/><path d="M3.500 3 L5.500 0.500 L7.500 3 M10.500 7.500 L13 9.500 L10.500 11.500 M1 11 V14 H4" fill="none" stroke="#222" stroke-width="1"/></svg>
<div class="t" style="left:25px;top:53px">Chicken-ogremesh</div>
<svg style="left:4px;top:74px" width="9" height="9"><use href="#minusbox"/></svg>
<div class="hd" style="left:14px;top:78px;width:6px"></div>
<svg style="left:21px;top:71px" width="13" height="14" viewBox="0 0 14 14" preserveAspectRatio="none"><path d="M0.500 4.500 L4 0.500 H13.500 L9.500 4.500Z" fill="#22b43a" stroke="#111"/><path d="M9.500 4.500 L13.500 0.500 V9.500 L9.500 13.500Z" fill="#2244cc" stroke="#111"/><rect x="0.500" y="4.500" width="9" height="9" fill="#d23a14" stroke="#111"/></svg>
<div class="a" style="left:43px;top:69px;width:41px;height:18px;background:#e3e3e3"></div>
<div class="t" style="left:44px;top:71px">Chicken</div>
<div class="vd" style="left:27px;top:86px;height:11px"></div><div class="hd" style="left:28px;top:96px;width:10px"></div>
<svg style="left:40px;top:89px" width="14" height="14" viewBox="0 0 14 14"><path d="M0.500 4.500 L4.500 0.500 H13.500 V9.500 L9.500 13.500 H0.500Z M0.500 4.500 H9.500 V13.500 M9.500 4.500 L13.500 0.500 M4.500 0.500 V9.500 H13.500 M4.500 9.500 L0.500 13.500" fill="none" stroke="#111" stroke-width="1"/></svg>
<div class="t" style="left:63px;top:89px">Mesh</div>
<svg style="left:4px;top:110px" width="9" height="9"><use href="#plusbox"/></svg><div class="hd" style="left:14px;top:114px;width:6px"></div>
<div class="t" style="left:21px;top:105px;font-size:16px;font-weight:bold;color:#12915a;-webkit-text-stroke:0.7px #12915a;line-height:18px;height:18px;letter-spacing:0;transform:scaleX(1.18);transform-origin:0 0">A</div>
<div class="t" style="left:44px;top:107px">AnimControl</div>
<svg style="left:4px;top:128px" width="9" height="9"><use href="#plusbox"/></svg><div class="hd" style="left:14px;top:132px;width:6px"></div>
<div class="t" style="left:22px;top:123px;font-size:16px;font-weight:bold;color:#12915a;-webkit-text-stroke:0.7px #12915a;line-height:18px;height:18px;letter-spacing:0;transform:scaleX(1.12);transform-origin:0 0">S</div>
<div class="t" style="left:44px;top:125px">SkeletonControl</div>
</div><div class="a" id="ed"></div>
<div class="etab" style="left:320px;width:315px;border-color:#7a9cc6 #8b8b8b #f0f0f0 #7a9cc6;border-top:2px solid #6d95c7;background:linear-gradient(#e9f2fc 0,#d6e6f8 45%,#dceaf9 70%,#eef4fb 100%)">
<svg style="left:5px;top:3px" width="12" height="10" viewBox="0 0 12 10"><defs><linearGradient id="gsc" x1="0" y1="0" x2="0" y2="1"><stop offset="0" stop-color="#4a86d8"/><stop offset="0.4" stop-color="#cfe6f8"/><stop offset="0.55" stop-color="#7dbb3c"/><stop offset="1" stop-color="#2f7a14"/></linearGradient></defs><rect width="12" height="10" fill="url(#gsc)"/></svg>
<div class="etxt" style="left:22px;top:1px">SceneComposer - models/creatures/chicken/chicken.j3o</div>
<svg style="left:303px;top:5px" width="7" height="7"><use href="#closex"/></svg>
</div>
<div class="etab" style="left:634px;width:324px;border-left-color:#8b8b8b;background:linear-gradient(#ececec 0,#e5e5e5 50%,#d6d6d6 56%,#d0d0d0 100%);box-shadow:inset 1px 1px 0 #f8f8f8,inset -1px 0 0 #f4f4f4">
<div class="etxt" style="left:7px;letter-spacing:-0.09px">MyMaterial - models/creatures/chicken/chicken-Material.j3m</div>
<svg style="left:312px;top:6px" width="7" height="7"><use href="#closex"/></svg>
</div>
<div class="nbtn" style="left:1037px;width:30px"><div class="a" style="left:14px;top:0;width:1px;height:13px;background:#b5b5b5"></div><svg style="left:4px;top:3px" width="6" height="8" viewBox="0 0 6 8"><path d="M5 0.500V7.500L0.500 4Z" fill="#a8a8a8"/></svg><svg style="left:19px;top:3px" width="6" height="8" viewBox="0 0 6 8"><path d="M1 0.500V7.500L5.500 4Z" fill="#a8a8a8"/></svg></div>
<div class="nbtn" style="left:1070px;width:16px"><svg style="left:3px;top:4px" width="8" height="5" viewBox="0 0 8 5"><path d="M0 0.500H8L4 4.500Z" fill="#222"/></svg></div>
<div class="nbtn" style="left:1090px;width:16px"><svg style="left:3px;top:3px" width="8" height="7" viewBox="0 0 8 7"><rect x="0.500" y="0.500" width="7" height="6" fill="#f6f6f6" stroke="#222"/><path d="M0.500 1.500H7.500" stroke="#222" stroke-width="1.600"/></svg></div>
<div class="grip" style="left:324px;top:108px;height:20px;width:2px"></div>
<div class="a" style="left:333px;top:108px;width:22px;height:21px;border:1px solid #7d7d7d;border-radius:3px;background:#dcdde2"></div>
<svg style="left:339px;top:110px" width="11" height="16" viewBox="0 0 12 17"><defs><radialGradient id="gbulb" cx="0.4" cy="0.35" r="0.7"><stop offset="0" stop-color="#fff27a"/><stop offset="0.6" stop-color="#fbc51e"/><stop offset="1" stop-color="#ef9a10"/></radialGradient></defs>
<path d="M6 0.500 C2.500 0.500 1 3 1 5.500 C1 8 2.500 9.500 3 11.500 H9 C9.500 9.500 11 8 11 5.500 C11 3 9.500 0.500 6 0.500Z" fill="url(#gbulb)" stroke="#d8900c" stroke-width="0.600"/>
<path d="M3.500 11.500 H8.500 V14.500 Q8.500 16.300 6 16.300 Q3.500 16.300 3.500 14.500Z" fill="#f4f6fb" stroke="#4a5a8a" stroke-width="0.900"/></svg>
<svg style="left:359px;top:112px" width="17" height="12" viewBox="0 0 17 12">
<path d="M0.500 6 Q8.500 -3 16.500 6 Q8.500 14 0.500 6Z" fill="#fbfbf4" stroke="#c9a248" stroke-width="1.100"/>
<circle cx="8.500" cy="5.800" r="3.600" fill="#4a6fb0"/><circle cx="8.500" cy="5.800" r="1.800" fill="#1a2a5a"/><circle cx="7.500" cy="4.800" r="0.800" fill="#dfe8ff"/></svg>
<div class="a" style="left:381px;top:109px;width:1px;height:19px;background:#9a9a9a"></div>
<svg style="left:389px;top:111px" width="13" height="13" viewBox="0 0 14 14"><path d="M0.500 4.500 L4 0.500 H13.500 L9.500 4.500Z" fill="#22b43a" stroke="#111"/><path d="M9.500 4.500 L13.500 0.500 V9.500 L9.500 13.500Z" fill="#2244cc" stroke="#111"/><rect x="0.500" y="4.500" width="9" height="9" fill="#ee3a0e" stroke="#111"/></svg>
<svg style="left:1085px;top:110px" width="16" height="16" viewBox="0 0 16 16"><defs><radialGradient id="ginf" cx="0.4" cy="0.3" r="0.8"><stop offset="0" stop-color="#6ea4e6"/><stop offset="1" stop-color="#1f56b0"/></radialGradient></defs><circle cx="8" cy="8" r="7.500" fill="url(#ginf)"/><path d="M7 6.500 H9 L8.300 12 H9.500 M8.500 3.200 V4.700" stroke="#fff" stroke-width="1.700" fill="none"/></svg>
<div class="a" id="view"><svg style="left:0;top:0" width="785" height="813" viewBox="321 131 785 813"><defs>
<linearGradient id="cgBody" x1="0" y1="0" x2="0" y2="1"><stop offset="0" stop-color="#c0c0b4"/><stop offset="0.18" stop-color="#e2e2d6"/><stop offset="0.6" stop-color="#dedfd1"/><stop offset="0.85" stop-color="#bfbfb0"/><stop offset="1" stop-color="#88887a"/></linearGradient>
<linearGradient id="cgTail" x1="0" y1="0" x2="1" y2="0.3"><stop offset="0" stop-color="#8c8c86"/><stop offset="0.25" stop-color="#d9d9d2"/><stop offset="1" stop-color="#e6e6df"/></linearGradient>
<linearGradient id="cgDark" x1="0" y1="0" x2="1" y2="1"><stop offset="0" stop-color="#0e0e14"/><stop offset="0.6" stop-color="#2a2a30"/><stop offset="1" stop-color="#4a4a4c"/></linearGradient>
<linearGradient id="cgWing" x1="0" y1="0" x2="0.3" y2="1"><stop offset="0" stop-color="#ecece4"/><stop offset="0.7" stop-color="#e0e0d4"/><stop offset="1" stop-color="#c6c6ba"/></linearGradient>
<radialGradient id="cgFace" cx="0.5" cy="0.5" r="0.5"><stop offset="0" stop-color="#bf3f1d"/><stop offset="0.6" stop-color="#a93618"/><stop offset="1" stop-color="#7e2810"/></radialGradient>
<linearGradient id="cgLeg" x1="0" y1="0" x2="1" y2="0"><stop offset="0" stop-color="#bba89e"/><stop offset="1" stop-color="#8c7a74"/></linearGradient>
<linearGradient id="cgNeckShade" x1="0" y1="0" x2="0" y2="1"><stop offset="0" stop-color="#000" stop-opacity="0"/><stop offset="0.7" stop-color="#000" stop-opacity="0"/><stop offset="1" stop-color="#000" stop-opacity="0.55"/></linearGradient>
<filter id="cfNoise" x="0" y="0" width="1" height="1"><feTurbulence type="fractalNoise" baseFrequency="0.3" numOctaves="2" seed="3" result="n"/><feColorMatrix type="matrix" values="0 0 0 0 0  0 0 0 0 0  0 0 0 0 0  1.6 0 0 0 -0.62"/></filter><filter id="cfBlur0"><feGaussianBlur stdDeviation="0.45"/></filter><filter id="cfBlur1"><feGaussianBlur stdDeviation="0.8"/></filter>
<filter id="cfBlur2"><feGaussianBlur stdDeviation="2.5"/></filter>
<clipPath id="ccBody"><path d="M560 300 L585 298.5 L625.5 307 L653.5 313.5 L707.5 315.5 L730 318.5 L745 322 L764.5 326.7 L789 320.5 L802 318.6 L834 320.5 L871.6 313.5 L892 312 L916 317 L927.5 334 L951.7 348 L927.5 358 L923.8 380.6 L901.4 399 L884.6 401 L877 395.5 L860 399 L827 406.7 L817.6 410.4 L816.6 429 L804.5 434.6 L769 459 L705.7 464.7 L653.5 467.500 L654.4 434.7 L644 421.6 L625.5 417.9 L580.8 429 L566.8 421.6 L573 410 L614 377 L569.6 350.8 L566 334 L560.3 317.3Z"/></clipPath>
</defs><g filter="url(#cfBlur1)"><path d="M652.600 466 L668 466 L661 484 L675 532 L702 545 L691.700 549 L667.500 543.500 L663 531 L647 486Z" fill="url(#cgLeg)"/><path d="M668.400 466 L682.500 466 L695 515 L708 528 L685 527 L682 517Z" fill="#a8948c"/><path d="M661 484 L675 532 L679 533 L668 500Z" fill="#6a5a58" opacity="0.600"/></g><g filter="url(#cfBlur1)"><path d="M521 365.700 L560 317 L569.600 350.800 L553 360Z" fill="url(#cgDark)"/><path d="M553 360 L569.600 350.800 L614 377 L584.500 399 L571.500 373 L538 392.700Z" fill="#1d1d22"/><path d="M572 366 L612 378 L585.500 398.500Z" fill="#4c4c48"/></g><g filter="url(#cfBlur1)"><path d="M560 300 L585 298.5 L625.5 307 L653.5 313.5 L707.5 315.5 L730 318.5 L745 322 L764.5 326.7 L789 320.5 L802 318.6 L834 320.5 L871.6 313.5 L892 312 L916 317 L927.5 334 L951.7 348 L927.5 358 L923.8 380.6 L901.4 399 L884.6 401 L877 395.5 L860 399 L827 406.7 L817.6 410.4 L816.6 429 L804.5 434.6 L769 459 L705.7 464.7 L653.5 467.500 L654.4 434.7 L644 421.6 L625.5 417.9 L580.8 429 L566.8 421.6 L573 410 L614 377 L569.6 350.8 L566 334 L560.3 317.3Z" fill="url(#cgBody)"/></g><g clip-path="url(#ccBody)"><path d="M554 300 L562 303 L566 308 L567 313 L570 327 L568 340 L575 348 L616 376 L604 384 L552 352Z" fill="#131318" filter="url(#cfBlur1)"/><path d="M560 297 L600 298 L588 308 L566 312Z" fill="#3a3a40" opacity="0.550" filter="url(#cfBlur2)"/><g filter="url(#cfBlur1)"><path d="M566 303.4 L590 302.5 L566 306.6Z" fill="#16161c" opacity="0.750"/><path d="M569 307.4 L584 306.5 L569 310.6Z" fill="#16161c" opacity="0.750"/><path d="M566 311.4 L592 310.5 L566 314.6Z" fill="#16161c" opacity="0.750"/><path d="M569 316.4 L582 315.5 L569 319.6Z" fill="#16161c" opacity="0.750"/><path d="M566 320.4 L587 319.5 L566 323.6Z" fill="#16161c" opacity="0.750"/><path d="M569 325.4 L580 324.5 L569 328.6Z" fill="#16161c" opacity="0.750"/><path d="M566 329.4 L582 328.5 L566 332.6Z" fill="#16161c" opacity="0.750"/><path d="M569 334.4 L578 333.5 L569 337.6Z" fill="#16161c" opacity="0.750"/><path d="M566 339.4 L578 338.5 L566 342.6Z" fill="#16161c" opacity="0.750"/><path d="M569 343.4 L576 342.5 L569 346.6Z" fill="#16161c" opacity="0.750"/><path d="M575.5 349.5 L582.5 346.4 L580.5 352.5Z" fill="#16161c" opacity="0.600"/><path d="M578.0 352.3 L587.0 347.9 L583.0 355.3Z" fill="#16161c" opacity="0.600"/><path d="M582.0 355.1 L593.0 349.4 L587.0 358.1Z" fill="#16161c" opacity="0.600"/><path d="M587.5 357.9 L595.5 354.1 L592.5 360.9Z" fill="#16161c" opacity="0.600"/><path d="M590.0 360.7 L600.0 355.6 L595.0 363.7Z" fill="#16161c" opacity="0.600"/><path d="M594.0 363.5 L601.0 360.4 L599.0 366.5Z" fill="#16161c" opacity="0.600"/><path d="M599.5 366.3 L608.5 361.9 L604.5 369.3Z" fill="#16161c" opacity="0.600"/><path d="M602.0 369.1 L613.0 363.4 L607.0 372.1Z" fill="#16161c" opacity="0.600"/><path d="M606.0 371.9 L614.0 368.1 L611.0 374.9Z" fill="#16161c" opacity="0.600"/><path d="M611.5 374.7 L621.5 369.6 L616.5 377.7Z" fill="#16161c" opacity="0.600"/></g><path d="M570 347 L618 378 L612 384 L562 352Z" fill="#0e0e12" opacity="0.700" filter="url(#cfBlur1)"/><path d="M573 410 L659 334 L700 350 L690 396 L644 421 L625 418 L581 429 L567 422Z" fill="url(#cgWing)" opacity="0.900"/><path d="M573 416 L659 336 L664 338 L582 421Z" fill="#fafaf6" opacity="0.700" filter="url(#cfBlur1)"/><path d="M614 378 L659 333 L652 346 L620 377Z" fill="#2a2a2e" opacity="0.800" filter="url(#cfBlur1)"/><path d="M650 450 L700 452 L770 444 L806 422 L818 405 L860 394 L880 392 L905 396 L930 372 L960 372 L960 480 L640 480Z" fill="#000" opacity="0.600" filter="url(#cfBlur2)"/><path d="M650 440 L700 443 L765 436 L800 416 L815 398 L860 388 L905 390 L960 380 L960 480 L640 480Z" fill="#000" opacity="0.220" filter="url(#cfBlur2)"/><path d="M780 440 L812 405 L822 406 L820 436 L790 462Z" fill="#000" opacity="0.500" filter="url(#cfBlur2)"/><path d="M640 306 L960 306 L960 318 L840 323 L800 322 L765 330 L735 322 L708 318 L640 313Z" fill="#55554e" opacity="0.350" filter="url(#cfBlur2)"/><rect x="556" y="294" width="400" height="180" filter="url(#cfNoise)" opacity="0.130"/><g filter="url(#cfBlur0)"><path d="M737.9 358.2 l2.9 -1.7" stroke="#25252a" stroke-width="1.7" stroke-linecap="round" opacity="0.67"/><path d="M747.4 326.8 l4.3 -2.4" stroke="#25252a" stroke-width="1.4" stroke-linecap="round" opacity="0.39"/><path d="M784.9 370.1 l2.8 -2.9" stroke="#25252a" stroke-width="2.4" stroke-linecap="round" opacity="0.46"/><path d="M763.7 388.1 l2.6 -1.9" stroke="#25252a" stroke-width="1.6" stroke-linecap="round" opacity="0.73"/><path d="M724.5 337.0 l5.9 -3.1" stroke="#25252a" stroke-width="2.0" stroke-linecap="round" opacity="0.52"/><path d="M766.5 395.4 l2.2 -2.4" stroke="#25252a" stroke-width="1.5" stroke-linecap="round" opacity="0.42"/><path d="M772.1 400.3 l3.3 -4.6" stroke="#25252a" stroke-width="1.7" stroke-linecap="round" opacity="0.56"/><path d="M791.4 413.7 l2.7 -4.9" stroke="#25252a" stroke-width="2.4" stroke-linecap="round" opacity="0.49"/><path d="M767.1 406.1 l2.6 -2.4" stroke="#25252a" stroke-width="2.2" stroke-linecap="round" opacity="0.59"/><path d="M749.9 337.9 l5.0 -3.3" stroke="#25252a" stroke-width="2.0" stroke-linecap="round" opacity="0.66"/><path d="M770.4 423.3 l3.2 -4.7" stroke="#25252a" stroke-width="1.8" stroke-linecap="round" opacity="0.65"/><path d="M809.6 419.1 l3.1 -5.1" stroke="#25252a" stroke-width="2.1" stroke-linecap="round" opacity="0.26"/><path d="M809.3 396.4 l3.2 -2.9" stroke="#25252a" stroke-width="2.1" stroke-linecap="round" opacity="0.32"/><path d="M741.3 322.7 l3.2 -1.5" stroke="#25252a" stroke-width="2.2" stroke-linecap="round" opacity="0.40"/><path d="M730.4 335.3 l6.2 -3.0" stroke="#25252a" stroke-width="1.8" stroke-linecap="round" opacity="0.46"/><path d="M793.6 384.8 l5.5 -4.2" stroke="#25252a" stroke-width="1.8" stroke-linecap="round" opacity="0.34"/><path d="M790.4 362.3 l3.3 -1.6" stroke="#25252a" stroke-width="1.6" stroke-linecap="round" opacity="0.31"/><path d="M753.3 347.5 l3.7 -1.9" stroke="#25252a" stroke-width="1.8" stroke-linecap="round" opacity="0.38"/><path d="M764.2 363.6 l5.5 -2.7" stroke="#25252a" stroke-width="2.0" stroke-linecap="round" opacity="0.54"/><path d="M757.0 399.8 l4.8 -4.4" stroke="#25252a" stroke-width="2.3" stroke-linecap="round" opacity="0.84"/><path d="M753.9 366.3 l4.2 -4.1" stroke="#25252a" stroke-width="1.4" stroke-linecap="round" opacity="0.42"/><path d="M731.0 344.6 l2.8 -1.6" stroke="#25252a" stroke-width="1.5" stroke-linecap="round" opacity="0.44"/><path d="M736.9 332.0 l5.9 -3.6" stroke="#25252a" stroke-width="1.5" stroke-linecap="round" opacity="0.65"/><path d="M744.3 349.8 l3.0 -1.9" stroke="#25252a" stroke-width="2.5" stroke-linecap="round" opacity="0.75"/><path d="M761.6 375.0 l2.3 -2.6" stroke="#25252a" stroke-width="1.6" stroke-linecap="round" opacity="0.50"/><path d="M763.8 417.8 l2.8 -6.7" stroke="#25252a" stroke-width="1.5" stroke-linecap="round" opacity="0.67"/><path d="M748.1 384.1 l5.4 -5.1" stroke="#25252a" stroke-width="2.1" stroke-linecap="round" opacity="0.84"/><path d="M746.1 350.8 l5.2 -3.9" stroke="#25252a" stroke-width="2.2" stroke-linecap="round" opacity="0.61"/><path d="M741.4 358.9 l6.6 -3.4" stroke="#25252a" stroke-width="2.3" stroke-linecap="round" opacity="0.79"/><path d="M794.4 416.6 l2.5 -4.7" stroke="#25252a" stroke-width="1.3" stroke-linecap="round" opacity="0.42"/><path d="M726.1 323.3 l5.6 -2.4" stroke="#25252a" stroke-width="1.8" stroke-linecap="round" opacity="0.82"/><path d="M813.1 430.6 l2.7 -3.7" stroke="#25252a" stroke-width="1.6" stroke-linecap="round" opacity="0.28"/><path d="M732.3 343.2 l6.4 -2.9" stroke="#25252a" stroke-width="1.9" stroke-linecap="round" opacity="0.79"/><path d="M794.5 397.1 l3.2 -5.0" stroke="#25252a" stroke-width="2.2" stroke-linecap="round" opacity="0.55"/><path d="M777.1 408.5 l3.3 -5.7" stroke="#25252a" stroke-width="2.3" stroke-linecap="round" opacity="0.50"/><path d="M775.6 434.7 l2.9 -6.7" stroke="#25252a" stroke-width="1.5" stroke-linecap="round" opacity="0.68"/><path d="M724.8 335.0 l6.4 -1.7" stroke="#25252a" stroke-width="2.3" stroke-linecap="round" opacity="0.50"/><path d="M790.2 435.7 l2.1 -5.1" stroke="#25252a" stroke-width="1.3" stroke-linecap="round" opacity="0.37"/><path d="M789.6 434.6 l3.2 -6.5" stroke="#25252a" stroke-width="2.3" stroke-linecap="round" opacity="0.48"/><path d="M765.4 417.5 l2.0 -3.8" stroke="#25252a" stroke-width="2.0" stroke-linecap="round" opacity="0.53"/><path d="M749.6 350.6 l5.7 -4.3" stroke="#25252a" stroke-width="1.8" stroke-linecap="round" opacity="0.53"/><path d="M797.6 388.8 l4.8 -5.2" stroke="#25252a" stroke-width="1.9" stroke-linecap="round" opacity="0.39"/><path d="M746.7 381.8 l2.8 -2.7" stroke="#25252a" stroke-width="2.3" stroke-linecap="round" opacity="0.45"/><path d="M749.5 340.3 l5.1 -2.0" stroke="#25252a" stroke-width="1.9" stroke-linecap="round" opacity="0.50"/><path d="M786.6 385.5 l3.4 -4.4" stroke="#25252a" stroke-width="1.6" stroke-linecap="round" opacity="0.37"/><path d="M779.1 411.1 l3.8 -5.2" stroke="#25252a" stroke-width="1.8" stroke-linecap="round" opacity="0.70"/><path d="M772.1 392.3 l4.2 -4.5" stroke="#25252a" stroke-width="1.9" stroke-linecap="round" opacity="0.54"/><path d="M793.4 376.4 l5.6 -4.1" stroke="#25252a" stroke-width="1.6" stroke-linecap="round" opacity="0.47"/><path d="M799.0 386.0 l2.9 -2.2" stroke="#25252a" stroke-width="1.8" stroke-linecap="round" opacity="0.27"/><path d="M726.3 328.6 l5.2 -2.9" stroke="#25252a" stroke-width="2.4" stroke-linecap="round" opacity="0.76"/><path d="M771.7 338.2 l3.4 -1.3" stroke="#25252a" stroke-width="2.5" stroke-linecap="round" opacity="0.59"/><path d="M798.0 345.9 l4.5 -2.6" stroke="#25252a" stroke-width="2.3" stroke-linecap="round" opacity="0.48"/><path d="M745.5 339.1 l4.1 -1.9" stroke="#25252a" stroke-width="1.7" stroke-linecap="round" opacity="0.46"/><path d="M758.5 405.2 l3.1 -3.9" stroke="#25252a" stroke-width="1.7" stroke-linecap="round" opacity="0.46"/><path d="M773.2 393.6 l4.1 -6.2" stroke="#25252a" stroke-width="2.5" stroke-linecap="round" opacity="0.66"/><path d="M730.0 332.4 l5.5 -3.4" stroke="#25252a" stroke-width="1.5" stroke-linecap="round" opacity="0.53"/><path d="M792.0 369.8 l3.6 -2.2" stroke="#25252a" stroke-width="2.4" stroke-linecap="round" opacity="0.29"/><path d="M781.7 387.3 l2.0 -2.6" stroke="#25252a" stroke-width="1.8" stroke-linecap="round" opacity="0.54"/><path d="M796.9 328.5 l6.3 -2.0" stroke="#25252a" stroke-width="2.3" stroke-linecap="round" opacity="0.27"/><path d="M787.2 327.9 l4.2 -1.6" stroke="#25252a" stroke-width="2.4" stroke-linecap="round" opacity="0.42"/><path d="M733.7 351.6 l3.5 -2.0" stroke="#25252a" stroke-width="1.5" stroke-linecap="round" opacity="0.49"/><path d="M722.3 325.9 l4.0 -1.7" stroke="#25252a" stroke-width="1.6" stroke-linecap="round" opacity="0.76"/><path d="M749.1 379.0 l2.2 -2.2" stroke="#25252a" stroke-width="1.3" stroke-linecap="round" opacity="0.54"/><path d="M781.2 406.5 l2.6 -4.4" stroke="#25252a" stroke-width="1.4" stroke-linecap="round" opacity="0.69"/><path d="M775.4 416.6 l3.7 -5.7" stroke="#25252a" stroke-width="1.9" stroke-linecap="round" opacity="0.54"/><path d="M811.4 401.2 l4.0 -5.4" stroke="#25252a" stroke-width="2.1" stroke-linecap="round" opacity="0.39"/><path d="M751.6 367.8 l2.5 -2.6" stroke="#25252a" stroke-width="2.2" stroke-linecap="round" opacity="0.43"/><path d="M734.3 350.2 l5.3 -4.2" stroke="#25252a" stroke-width="2.1" stroke-linecap="round" opacity="0.81"/><path d="M739.7 353.3 l4.1 -2.9" stroke="#25252a" stroke-width="1.8" stroke-linecap="round" opacity="0.49"/><path d="M798.7 351.1 l5.1 -1.9" stroke="#25252a" stroke-width="2.5" stroke-linecap="round" opacity="0.30"/><path d="M747.7 356.5 l3.5 -3.2" stroke="#25252a" stroke-width="1.9" stroke-linecap="round" opacity="0.59"/><path d="M753.4 343.7 l3.3 -2.5" stroke="#25252a" stroke-width="1.8" stroke-linecap="round" opacity="0.40"/><path d="M713.7 324.9 l3.7 -1.6" stroke="#25252a" stroke-width="1.9" stroke-linecap="round" opacity="0.71"/><path d="M788.3 408.6 l4.5 -5.3" stroke="#25252a" stroke-width="1.7" stroke-linecap="round" opacity="0.46"/><path d="M766.0 436.2 l2.9 -5.1" stroke="#25252a" stroke-width="2.3" stroke-linecap="round" opacity="0.46"/><path d="M787.5 425.2 l3.7 -5.5" stroke="#25252a" stroke-width="1.9" stroke-linecap="round" opacity="0.39"/><path d="M786.7 379.5 l5.5 -3.9" stroke="#25252a" stroke-width="2.4" stroke-linecap="round" opacity="0.44"/><path d="M788.9 400.6 l1.8 -2.6" stroke="#25252a" stroke-width="1.7" stroke-linecap="round" opacity="0.36"/><path d="M784.2 332.4 l5.4 -2.1" stroke="#25252a" stroke-width="2.1" stroke-linecap="round" opacity="0.45"/><path d="M744.4 377.7 l5.2 -3.7" stroke="#25252a" stroke-width="1.9" stroke-linecap="round" opacity="0.68"/><path d="M756.1 397.8 l2.9 -2.9" stroke="#25252a" stroke-width="1.6" stroke-linecap="round" opacity="0.48"/><path d="M763.6 406.1 l5.0 -5.5" stroke="#25252a" stroke-width="1.8" stroke-linecap="round" opacity="0.64"/><path d="M774.5 376.5 l4.7 -3.3" stroke="#25252a" stroke-width="1.4" stroke-linecap="round" opacity="0.53"/><path d="M731.9 337.4 l4.1 -1.5" stroke="#25252a" stroke-width="1.3" stroke-linecap="round" opacity="0.66"/><path d="M727.4 327.2 l5.9 -1.8" stroke="#25252a" stroke-width="1.6" stroke-linecap="round" opacity="0.70"/><path d="M763.3 381.0 l2.6 -2.4" stroke="#25252a" stroke-width="1.5" stroke-linecap="round" opacity="0.72"/><path d="M809.2 435.4 l1.4 -4.9" stroke="#25252a" stroke-width="2.5" stroke-linecap="round" opacity="0.45"/><path d="M749.8 373.0 l5.1 -5.1" stroke="#25252a" stroke-width="2.0" stroke-linecap="round" opacity="0.51"/><path d="M752.5 336.7 l3.5 -0.9" stroke="#25252a" stroke-width="1.9" stroke-linecap="round" opacity="0.66"/><path d="M792.4 424.6 l2.9 -6.4" stroke="#25252a" stroke-width="1.3" stroke-linecap="round" opacity="0.47"/><path d="M743.4 320.4 l4.1 -1.4" stroke="#25252a" stroke-width="1.7" stroke-linecap="round" opacity="0.42"/><path d="M786.4 357.3 l4.7 -4.3" stroke="#25252a" stroke-width="1.4" stroke-linecap="round" opacity="0.51"/><path d="M793.3 429.3 l2.5 -3.5" stroke="#25252a" stroke-width="1.8" stroke-linecap="round" opacity="0.43"/><path d="M786.3 437.9 l1.8 -4.6" stroke="#25252a" stroke-width="1.4" stroke-linecap="round" opacity="0.44"/><path d="M784.1 332.0 l6.5 -3.2" stroke="#25252a" stroke-width="1.6" stroke-linecap="round" opacity="0.35"/><path d="M750.3 380.3 l5.2 -5.1" stroke="#25252a" stroke-width="2.3" stroke-linecap="round" opacity="0.81"/><path d="M801.7 394.4 l4.2 -3.4" stroke="#25252a" stroke-width="1.4" stroke-linecap="round" opacity="0.44"/><path d="M775.3 406.4 l4.0 -4.4" stroke="#25252a" stroke-width="1.4" stroke-linecap="round" opacity="0.49"/><path d="M764.4 429.4 l2.1 -4.0" stroke="#25252a" stroke-width="2.2" stroke-linecap="round" opacity="0.57"/><path d="M769.7 435.2 l2.1 -3.8" stroke="#25252a" stroke-width="1.8" stroke-linecap="round" opacity="0.65"/><path d="M728.1 339.7 l6.1 -3.7" stroke="#25252a" stroke-width="1.6" stroke-linecap="round" opacity="0.65"/><path d="M813.7 426.9 l1.7 -3.2" stroke="#25252a" stroke-width="1.4" stroke-linecap="round" opacity="0.27"/><path d="M736.9 360.4 l3.2 -2.6" stroke="#25252a" stroke-width="2.4" stroke-linecap="round" opacity="0.70"/><path d="M773.5 408.5 l3.0 -4.4" stroke="#25252a" stroke-width="1.7" stroke-linecap="round" opacity="0.54"/><path d="M728.1 327.3 l3.5 -0.7" stroke="#25252a" stroke-width="2.1" stroke-linecap="round" opacity="0.63"/><path d="M766.2 421.8 l1.8 -3.7" stroke="#25252a" stroke-width="1.8" stroke-linecap="round" opacity="0.60"/><path d="M802.8 432.6 l1.7 -2.6" stroke="#25252a" stroke-width="2.2" stroke-linecap="round" opacity="0.28"/><path d="M778.6 425.7 l1.5 -2.6" stroke="#25252a" stroke-width="2.4" stroke-linecap="round" opacity="0.52"/><path d="M802.8 417.4 l2.8 -3.1" stroke="#25252a" stroke-width="1.5" stroke-linecap="round" opacity="0.30"/><path d="M777.1 381.6 l5.2 -3.5" stroke="#25252a" stroke-width="2.2" stroke-linecap="round" opacity="0.53"/><path d="M765.4 374.0 l4.3 -4.9" stroke="#25252a" stroke-width="2.4" stroke-linecap="round" opacity="0.44"/><path d="M763.6 396.2 l2.3 -3.4" stroke="#25252a" stroke-width="2.1" stroke-linecap="round" opacity="0.67"/><path d="M720.3 333.2 l5.2 -2.1" stroke="#25252a" stroke-width="1.6" stroke-linecap="round" opacity="0.62"/><path d="M751.6 390.9 l3.2 -3.9" stroke="#25252a" stroke-width="2.1" stroke-linecap="round" opacity="0.88"/><path d="M778.6 424.3 l1.7 -3.7" stroke="#25252a" stroke-width="2.1" stroke-linecap="round" opacity="0.74"/><path d="M733.1 356.3 l5.1 -3.2" stroke="#25252a" stroke-width="1.6" stroke-linecap="round" opacity="0.64"/><path d="M805.3 398.7 l1.8 -2.6" stroke="#25252a" stroke-width="1.8" stroke-linecap="round" opacity="0.33"/><path d="M761.6 400.5 l4.5 -4.4" stroke="#25252a" stroke-width="1.5" stroke-linecap="round" opacity="0.65"/><path d="M771.7 434.4 l2.1 -3.4" stroke="#25252a" stroke-width="2.2" stroke-linecap="round" opacity="0.50"/><path d="M797.5 354.8 l3.3 -2.0" stroke="#25252a" stroke-width="1.8" stroke-linecap="round" opacity="0.29"/><path d="M807.0 398.5 l2.6 -4.0" stroke="#25252a" stroke-width="2.5" stroke-linecap="round" opacity="0.29"/><path d="M721.9 336.7 l4.0 -2.6" stroke="#25252a" stroke-width="2.4" stroke-linecap="round" opacity="0.85"/><path d="M813.8 406.5 l3.2 -3.1" stroke="#25252a" stroke-width="2.4" stroke-linecap="round" opacity="0.27"/><path d="M759.1 408.1 l3.0 -3.6" stroke="#25252a" stroke-width="1.7" stroke-linecap="round" opacity="0.62"/><path d="M723.0 340.0 l4.0 -2.3" stroke="#25252a" stroke-width="1.4" stroke-linecap="round" opacity="0.88"/><path d="M767.6 433.8 l2.6 -6.2" stroke="#25252a" stroke-width="1.8" stroke-linecap="round" opacity="0.78"/><path d="M743.7 325.8 l6.6 -2.7" stroke="#25252a" stroke-width="1.7" stroke-linecap="round" opacity="0.45"/><path d="M761.8 425.8 l3.1 -5.9" stroke="#25252a" stroke-width="1.3" stroke-linecap="round" opacity="0.79"/><path d="M714.3 324.1 l4.1 -0.8" stroke="#25252a" stroke-width="2.4" stroke-linecap="round" opacity="0.78"/><path d="M744.4 360.0 l5.3 -2.4" stroke="#25252a" stroke-width="2.2" stroke-linecap="round" opacity="0.53"/><path d="M743.4 357.3 l4.7 -4.3" stroke="#25252a" stroke-width="2.1" stroke-linecap="round" opacity="0.80"/><path d="M762.5 431.3 l1.9 -4.8" stroke="#25252a" stroke-width="2.4" stroke-linecap="round" opacity="0.88"/><path d="M745.8 365.6 l4.1 -3.2" stroke="#25252a" stroke-width="1.5" stroke-linecap="round" opacity="0.81"/><path d="M794.2 414.7 l4.2 -4.9" stroke="#25252a" stroke-width="1.7" stroke-linecap="round" opacity="0.49"/><path d="M748.5 357.7 l3.0 -1.5" stroke="#25252a" stroke-width="2.2" stroke-linecap="round" opacity="0.48"/><path d="M730.1 349.2 l4.3 -3.4" stroke="#25252a" stroke-width="2.5" stroke-linecap="round" opacity="0.59"/><path d="M813.0 424.3 l1.4 -3.1" stroke="#25252a" stroke-width="1.9" stroke-linecap="round" opacity="0.25"/><path d="M774.8 403.8 l2.6 -4.1" stroke="#25252a" stroke-width="2.1" stroke-linecap="round" opacity="0.62"/><path d="M801.8 408.3 l2.3 -2.7" stroke="#25252a" stroke-width="1.7" stroke-linecap="round" opacity="0.51"/><path d="M761.8 386.9 l3.0 -2.5" stroke="#25252a" stroke-width="1.6" stroke-linecap="round" opacity="0.50"/><path d="M790.2 338.1 l4.1 -1.8" stroke="#25252a" stroke-width="2.5" stroke-linecap="round" opacity="0.37"/><path d="M751.6 379.9 l4.8 -3.5" stroke="#25252a" stroke-width="1.4" stroke-linecap="round" opacity="0.85"/><path d="M784.1 376.0 l5.9 -3.9" stroke="#25252a" stroke-width="1.7" stroke-linecap="round" opacity="0.29"/><path d="M726.3 334.1 l5.5 -1.3" stroke="#25252a" stroke-width="1.7" stroke-linecap="round" opacity="0.83"/><path d="M776.9 422.2 l2.8 -5.9" stroke="#25252a" stroke-width="1.4" stroke-linecap="round" opacity="0.74"/><path d="M778.0 390.3 l2.9 -3.7" stroke="#25252a" stroke-width="1.5" stroke-linecap="round" opacity="0.39"/><path d="M763.5 350.1 l3.5 -1.8" stroke="#25252a" stroke-width="1.7" stroke-linecap="round" opacity="0.35"/><path d="M760.9 400.0 l2.3 -3.2" stroke="#25252a" stroke-width="2.0" stroke-linecap="round" opacity="0.78"/><path d="M717.9 327.5 l5.1 -2.1" stroke="#25252a" stroke-width="1.4" stroke-linecap="round" opacity="0.73"/><path d="M769.8 339.3 l3.8 -1.9" stroke="#25252a" stroke-width="2.4" stroke-linecap="round" opacity="0.42"/><path d="M762.6 356.9 l4.0 -2.8" stroke="#25252a" stroke-width="2.5" stroke-linecap="round" opacity="0.66"/><path d="M742.1 362.9 l3.4 -2.0" stroke="#25252a" stroke-width="2.4" stroke-linecap="round" opacity="0.43"/><path d="M784.4 370.0 l5.4 -4.5" stroke="#25252a" stroke-width="1.5" stroke-linecap="round" opacity="0.41"/><path d="M750.0 321.8 l6.8 -1.8" stroke="#25252a" stroke-width="2.0" stroke-linecap="round" opacity="0.39"/><path d="M759.9 363.8 l3.2 -2.9" stroke="#25252a" stroke-width="2.4" stroke-linecap="round" opacity="0.56"/><path d="M748.0 332.8 l7.1 -2.1" stroke="#25252a" stroke-width="1.5" stroke-linecap="round" opacity="0.45"/><path d="M812.1 431.3 l1.4 -2.9" stroke="#25252a" stroke-width="1.8" stroke-linecap="round" opacity="0.45"/><path d="M787.2 426.7 l2.1 -3.0" stroke="#25252a" stroke-width="1.6" stroke-linecap="round" opacity="0.61"/><path d="M786.6 367.7 l3.3 -1.9" stroke="#25252a" stroke-width="1.8" stroke-linecap="round" opacity="0.33"/><path d="M759.1 381.1 l2.6 -3.1" stroke="#25252a" stroke-width="2.4" stroke-linecap="round" opacity="0.68"/><path d="M752.2 324.8 l3.1 -0.8" stroke="#25252a" stroke-width="1.4" stroke-linecap="round" opacity="0.65"/><path d="M773.9 390.7 l3.2 -3.0" stroke="#25252a" stroke-width="2.0" stroke-linecap="round" opacity="0.51"/><path d="M772.0 370.2 l3.9 -3.1" stroke="#25252a" stroke-width="2.0" stroke-linecap="round" opacity="0.34"/><path d="M750.6 377.8 l5.3 -3.8" stroke="#25252a" stroke-width="1.5" stroke-linecap="round" opacity="0.62"/><path d="M745.3 375.8 l3.3 -3.7" stroke="#25252a" stroke-width="1.8" stroke-linecap="round" opacity="0.48"/><path d="M746.2 380.2 l2.6 -2.1" stroke="#25252a" stroke-width="2.2" stroke-linecap="round" opacity="0.78"/><path d="M746.5 380.4 l3.5 -3.1" stroke="#25252a" stroke-width="1.5" stroke-linecap="round" opacity="0.87"/><path d="M813.7 421.1 l3.9 -5.4" stroke="#25252a" stroke-width="2.5" stroke-linecap="round" opacity="0.27"/><path d="M795.2 378.0 l3.1 -2.0" stroke="#25252a" stroke-width="2.4" stroke-linecap="round" opacity="0.43"/><path d="M733.9 327.7 l3.6 -1.0" stroke="#25252a" stroke-width="1.6" stroke-linecap="round" opacity="0.76"/><path d="M763.0 416.2 l3.9 -6.0" stroke="#25252a" stroke-width="1.6" stroke-linecap="round" opacity="0.53"/><path d="M755.2 379.7 l2.4 -3.0" stroke="#25252a" stroke-width="2.4" stroke-linecap="round" opacity="0.48"/><path d="M803.8 400.2 l3.6 -5.5" stroke="#25252a" stroke-width="1.9" stroke-linecap="round" opacity="0.29"/><path d="M765.7 395.1 l4.2 -3.6" stroke="#25252a" stroke-width="2.4" stroke-linecap="round" opacity="0.63"/><path d="M803.7 332.3 l4.5 -1.6" stroke="#25252a" stroke-width="1.6" stroke-linecap="round" opacity="0.41"/><path d="M785.5 436.9 l2.4 -6.0" stroke="#25252a" stroke-width="1.5" stroke-linecap="round" opacity="0.51"/><path d="M759.3 407.7 l2.8 -3.0" stroke="#25252a" stroke-width="2.5" stroke-linecap="round" opacity="0.73"/><path d="M780.2 389.1 l2.0 -2.3" stroke="#25252a" stroke-width="1.5" stroke-linecap="round" opacity="0.34"/><path d="M768.1 392.7 l4.8 -5.1" stroke="#25252a" stroke-width="1.6" stroke-linecap="round" opacity="0.44"/><path d="M755.0 397.1 l2.4 -3.9" stroke="#25252a" stroke-width="1.7" stroke-linecap="round" opacity="0.50"/><path d="M761.1 346.5 l3.5 -1.7" stroke="#25252a" stroke-width="1.9" stroke-linecap="round" opacity="0.57"/><path d="M796.4 335.9 l3.2 -1.8" stroke="#25252a" stroke-width="2.1" stroke-linecap="round" opacity="0.27"/><path d="M797.7 422.8 l2.0 -3.7" stroke="#25252a" stroke-width="2.1" stroke-linecap="round" opacity="0.30"/><path d="M760.4 386.4 l3.7 -3.3" stroke="#25252a" stroke-width="2.2" stroke-linecap="round" opacity="0.78"/><path d="M792.6 349.3 l4.2 -3.4" stroke="#25252a" stroke-width="1.6" stroke-linecap="round" opacity="0.36"/><path d="M776.9 326.9 l4.8 -2.7" stroke="#25252a" stroke-width="1.5" stroke-linecap="round" opacity="0.57"/><path d="M762.4 343.5 l5.3 -2.7" stroke="#25252a" stroke-width="1.5" stroke-linecap="round" opacity="0.62"/><path d="M744.4 356.5 l5.3 -4.6" stroke="#25252a" stroke-width="2.2" stroke-linecap="round" opacity="0.74"/><path d="M784.5 320.7 l5.0 -1.1" stroke="#25252a" stroke-width="1.8" stroke-linecap="round" opacity="0.48"/><path d="M729.8 346.7 l2.6 -1.8" stroke="#25252a" stroke-width="2.2" stroke-linecap="round" opacity="0.59"/></g><path d="M874 348 C876 336 888 327 903 326 L899 311 L917 316 L928.500 338 L926 363 L921 384 L900 399 L883 399 L873 373Z" fill="url(#cgFace)" filter="url(#cfBlur1)"/><path d="M874 372 L924 372 L921 386 L900 401 L882 401Z" fill="#4a1408" opacity="0.450" filter="url(#cfBlur2)"/><path d="M927 337 L952 348.500 L927.500 361 L924 349Z" fill="#b9b2a4" filter="url(#cfBlur1)"/><path d="M927 352 L950 349 L927.500 361Z" fill="#55504a" opacity="0.700"/></g><path d="M872.700 312 L877 301.500 L884 304 L890 298.500 L896 301 L903 297 L910 306 L918 314.600 L900 316 L890 312.500Z" fill="#7e3018" filter="url(#cfBlur1)"/><path d="M899 300 L903 297 L918 314.600 L902 318 Z" fill="#c04a22" opacity="0.900" filter="url(#cfBlur1)"/><ellipse cx="889" cy="334" rx="9" ry="7" fill="#e9e6dc" opacity="0.800" filter="url(#cfBlur1)"/><circle cx="894" cy="338.700" r="4.600" fill="#0c0c10"/><circle cx="895.500" cy="338" r="1.600" fill="#6a6a72"/><path d="M560.0 300.0 L585.0 298.5 L625.5 307.0 L653.5 313.5 L707.5 315.5" fill="none" stroke="#1818f4" stroke-width="1.35" stroke-dasharray="4 3"/><path d="M707.5 315.5 L730.0 318.5 L745.0 322.0 L764.5 326.7 L789.0 320.5 L802.0 318.6 L834.0 320.5 L871.6 313.5 L892.0 312.0" fill="none" stroke="#1818f4" stroke-width="1.35" stroke-dasharray="4 3"/><path d="M884.6 401.0 L877.0 395.5 L860.0 399.0 L827.0 406.7 L817.6 410.4 L816.6 429.0 L804.5 434.6 L769.0 459.0 L705.7 464.7 L653.5 467.5" fill="none" stroke="#1818f4" stroke-width="1.6" stroke-dasharray="4 3"/><path d="M653.5 467.5 L654.4 434.7" fill="none" stroke="#1818f4" stroke-width="1.35"/><path d="M644.0 421.6 L625.5 417.9 L580.8 429.0 L566.8 421.6" fill="none" stroke="#1818f4" stroke-width="1.35" stroke-dasharray="4 3"/><path d="M521.2 365.7 L560.3 317.3 L560.0 300.0" fill="none" stroke="#1818f4" stroke-width="1.35"/><path d="M560.3 317.3 L569.6 350.8 L553.0 360.0 L521.2 365.7" fill="none" stroke="#1818f4" stroke-width="1.35"/><path d="M553.0 360.0 L538.0 392.7 L571.5 373.0 L569.6 350.8" fill="none" stroke="#1818f4" stroke-width="1.35"/><path d="M538.0 392.7 L584.5 399.0 L614.0 377.0" fill="none" stroke="#1818f4" stroke-width="1.35" stroke-dasharray="4 3"/><path d="M571.5 373.0 L614.0 377.0" fill="none" stroke="#1818f4" stroke-width="1.35" stroke-dasharray="4 3"/><path d="M521.2 365.7 L536.0 330.0 L560.0 300.0" fill="none" stroke="#1818f4" stroke-width="1.35" stroke-dasharray="1.5 2"/><path d="M560.3 317.3 L626.5 307.0" fill="none" stroke="#1818f4" stroke-width="1.35" stroke-dasharray="1.5 2"/><path d="M566.0 334.0 L634.0 326.6 L653.5 313.5" fill="none" stroke="#1818f4" stroke-width="1.35" stroke-dasharray="1.5 2"/><path d="M569.6 350.8 L634.0 326.6" fill="none" stroke="#1818f4" stroke-width="1.35" stroke-dasharray="1.5 2"/><path d="M572.0 325.0 L588.0 325.0" fill="none" stroke="#1818f4" stroke-width="1.35"/><path d="M603.0 326.0 L620.0 326.0" fill="none" stroke="#1818f4" stroke-width="1.35"/><path d="M573.4 417.0 L659.0 334.0" fill="none" stroke="#1818f4" stroke-width="1.35"/><path d="M566.8 421.6 L573.4 417.0" fill="none" stroke="#1818f4" stroke-width="1.35"/><path d="M626.5 307.0 L634.0 326.6 L632.0 360.0" fill="none" stroke="#1818f4" stroke-width="1.35"/><path d="M634.5 367.6 L689.8 396.5" fill="none" stroke="#1818f4" stroke-width="1.35"/><path d="M634.5 367.6 L693.5 337.8" fill="none" stroke="#1818f4" stroke-width="1.35" stroke-dasharray="1.5 2"/><path d="M659.0 334.0 L693.5 337.8" fill="none" stroke="#1818f4" stroke-width="1.35" stroke-dasharray="4 3"/><path d="M634.0 326.6 L659.0 334.0" fill="none" stroke="#1818f4" stroke-width="1.35" stroke-dasharray="1.5 2"/><path d="M573.0 410.0 L640.0 401.6 L690.6 397.0" fill="none" stroke="#1818f4" stroke-width="1.35" stroke-dasharray="4 3"/><path d="M580.0 418.0 L640.0 407.0 L690.6 397.0" fill="none" stroke="#1818f4" stroke-width="1.35" stroke-dasharray="1.5 2"/><path d="M581.0 411.0 L581.0 424.0" fill="none" stroke="#1818f4" stroke-width="1.35"/><path d="M640.0 413.0 L654.5 432.0 L697.5 449.0" fill="none" stroke="#1818f4" stroke-width="1.35" stroke-dasharray="1.5 2"/><path d="M667.0 420.8 L681.8 406.0" fill="none" stroke="#1818f4" stroke-width="1.35"/><path d="M707.5 315.4 L693.5 337.8 L690.7 395.5 L698.2 449.5" fill="none" stroke="#1818f4" stroke-width="1.35"/><path d="M690.7 395.5 L756.0 395.5" fill="none" stroke="#1818f4" stroke-width="1.35"/><path d="M693.5 337.8 L756.0 395.5" fill="none" stroke="#1818f4" stroke-width="1.35" stroke-dasharray="11 9"/><path d="M661.0 333.6 L693.5 337.8 L745.5 345.8" fill="none" stroke="#1818f4" stroke-width="1.35" stroke-dasharray="4 3"/><path d="M745.5 345.8 L797.0 337.0 L840.0 327.5 L871.6 313.5" fill="none" stroke="#1818f4" stroke-width="1.35" stroke-dasharray="4 3"/><path d="M745.5 345.8 L756.0 395.5" fill="none" stroke="#1818f4" stroke-width="1.35"/><path d="M756.0 395.5 L793.4 373.0 L808.3 359.7 L834.4 350.2" fill="none" stroke="#1818f4" stroke-width="1.35"/><path d="M755.0 396.4 L752.5 439.0" fill="none" stroke="#1818f4" stroke-width="1.35" stroke-dasharray="4 3"/><path d="M752.5 439.0 L697.5 449.0 L654.0 455.6" fill="none" stroke="#1818f4" stroke-width="1.35" stroke-dasharray="4 3"/><path d="M752.5 439.0 L804.8 432.0" fill="none" stroke="#1818f4" stroke-width="1.35" stroke-dasharray="4 3"/><path d="M752.5 439.0 L760.0 447.0" fill="none" stroke="#1818f4" stroke-width="1.35"/><path d="M697.5 449.0 L668.0 466.0" fill="none" stroke="#1818f4" stroke-width="1.35" stroke-dasharray="1.5 2"/><path d="M697.5 449.0 L740.0 456.0" fill="none" stroke="#1818f4" stroke-width="1.35" stroke-dasharray="4 3"/><path d="M715.0 434.7 L748.0 403.0" fill="none" stroke="#1818f4" stroke-width="1.35" stroke-dasharray="11 9"/><path d="M770.0 420.0 L784.7 406.0" fill="none" stroke="#1818f4" stroke-width="1.35"/><path d="M797.8 337.0 L790.8 399.0" fill="none" stroke="#1818f4" stroke-width="1.35" stroke-dasharray="4 3"/><path d="M790.8 399.0 L817.6 423.5" fill="none" stroke="#1818f4" stroke-width="1.35"/><path d="M834.4 350.2 L833.5 382.4" fill="none" stroke="#1818f4" stroke-width="1.35" stroke-dasharray="4 3"/><path d="M833.5 382.4 L815.0 391.0 L790.8 399.0" fill="none" stroke="#1818f4" stroke-width="1.35" stroke-dasharray="1.5 2"/><path d="M816.0 394.6 L817.9 426.0" fill="none" stroke="#1818f4" stroke-width="1.35" stroke-dasharray="4 3"/><path d="M756.0 395.5 L776.0 340.0 L797.0 337.0" fill="none" stroke="#1818f4" stroke-width="1.35" stroke-dasharray="1.5 2"/><path d="M752.5 439.0 L793.4 373.0" fill="none" stroke="#1818f4" stroke-width="1.35" stroke-dasharray="1.5 2"/><path d="M793.4 373.0 L797.8 337.0" fill="none" stroke="#1818f4" stroke-width="1.35" stroke-dasharray="1.5 2"/><path d="M808.3 359.7 L790.8 399.0" fill="none" stroke="#1818f4" stroke-width="1.35" stroke-dasharray="1.5 2"/><path d="M808.3 359.7 L834.0 321.0" fill="none" stroke="#1818f4" stroke-width="1.35" stroke-dasharray="1.5 2"/><path d="M815.0 391.0 L834.4 350.2" fill="none" stroke="#1818f4" stroke-width="1.35" stroke-dasharray="1.5 2"/><path d="M750.0 323.5 L745.5 345.8" fill="none" stroke="#1818f4" stroke-width="1.35" stroke-dasharray="1.5 2"/><path d="M775.0 324.5 L745.5 345.8" fill="none" stroke="#1818f4" stroke-width="1.35" stroke-dasharray="1.5 2"/><path d="M841.8 349.0 L951.7 348.6" fill="none" stroke="#1818f4" stroke-width="1.35"/><path d="M854.8 360.0 L892.0 317.0" fill="none" stroke="#1818f4" stroke-width="1.35"/><path d="M867.9 349.0 L884.6 399.0" fill="none" stroke="#1818f4" stroke-width="1.35"/><path d="M834.0 382.4 L877.0 378.0 L923.8 380.6" fill="none" stroke="#1818f4" stroke-width="1.35" stroke-dasharray="4 3"/><path d="M892.0 317.0 L899.0 349.0 L901.4 399.0" fill="none" stroke="#1818f4" stroke-width="1.35" stroke-dasharray="4 3"/><path d="M892.0 317.0 L927.5 334.0 L951.7 348.0 L927.5 358.0 L923.8 380.6 L901.4 399.0" fill="none" stroke="#1818f4" stroke-width="1.3" stroke-dasharray="1.5 2"/><path d="M899.0 349.0 L927.5 334.0" fill="none" stroke="#1818f4" stroke-width="1.35" stroke-dasharray="1.5 2"/><path d="M899.0 349.0 L927.5 358.0" fill="none" stroke="#1818f4" stroke-width="1.35" stroke-dasharray="1.5 2"/><path d="M899.0 378.0 L927.5 358.0" fill="none" stroke="#1818f4" stroke-width="1.35" stroke-dasharray="4 3"/><path d="M873.5 311.0 L879.0 300.5 L903.3 296.8 L916.3 314.0" fill="none" stroke="#1818f4" stroke-width="1.35" stroke-dasharray="1.5 2"/><path d="M860.0 330.0 L871.6 313.5 L892.0 317.0 L916.0 317.0" fill="none" stroke="#1818f4" stroke-width="1.35" stroke-dasharray="4 3"/><path d="M834.0 321.0 L860.0 330.0 L841.8 349.0" fill="none" stroke="#1818f4" stroke-width="1.35" stroke-dasharray="1.5 2"/><path d="M860.0 399.0 L884.6 401.0 L901.4 399.0" fill="none" stroke="#1818f4" stroke-width="1.6" stroke-dasharray="4 3"/><path d="M652.6 467.5 L647.0 486.0 L667.5 543.0 L691.7 548.6 L702.0 544.8" fill="none" stroke="#1818f4" stroke-width="1.35"/><path d="M666.6 468.4 L660.0 483.4 L674.0 531.8 L702.0 544.8" fill="none" stroke="#1818f4" stroke-width="1.35"/><path d="M668.4 468.4 L683.4 516.9 L707.6 528.0" fill="none" stroke="#1818f4" stroke-width="1.35" stroke-dasharray="4 3"/><path d="M681.5 468.4 L694.5 515.0 L707.6 528.0" fill="none" stroke="#1818f4" stroke-width="1.35"/><path d="M647.0 486.0 L660.0 483.4" fill="none" stroke="#1818f4" stroke-width="1.35"/><path d="M667.5 543.0 L674.0 531.8" fill="none" stroke="#1818f4" stroke-width="1.35" stroke-dasharray="1.5 2"/><path d="M667.5 549.0 L691.7 549.0" fill="none" stroke="#1818f4" stroke-width="1.35" stroke-dasharray="4 3"/><path d="M713.500 131 V537" stroke="#1c1cf0" stroke-width="1.300"/><path d="M714 537 L1106 567" stroke="#22e02a" stroke-width="1.300"/><path d="M714 537 L804.500 432" stroke="#f01c1c" stroke-width="1.200"/><path d="M804.500 432 L784 436.800 M804.500 432 L816.600 438.600 M804.500 432 L798.900 457.300 M804.500 432 L801 423" stroke="#f01c1c" stroke-width="1" fill="none"/><path d="M714 536 L700 510.400 M714 536 L716.500 507.600 M714 536 L727 512 M714 536 L710.400 515" stroke="#22e02a" stroke-width="1" fill="none"/><path d="M713.500 534 L692.700 517 M713.500 534 L703 520 M713.500 534 L720 522" stroke="#1c1cf0" stroke-width="1" fill="none"/></svg></div>
<div class="grip" style="left:325px;top:946px;height:21px;width:2px"></div>
<svg style="left:336px;top:948px" width="16" height="16" viewBox="0 0 16 16"><path d="M6 1 L8 3 Q13 2 14.500 7 Q15 12 10 14.500 Q5 15.500 2.500 12.500 L0.500 9 L3 5.500Z" fill="#8a5a28" stroke="#5a3814" stroke-width="0.700"/><path d="M2.500 9 Q3 13 7 13.500 Q4 11 5 7.500Z" fill="#d9b47a"/><circle cx="5.500" cy="7" r="0.900" fill="#1a1008"/></svg>
<div class="t" style="left:356px;top:952px;font-size:8px;letter-spacing:-0.15px">User</div>
<svg style="left:387px;top:947px" width="17" height="17" viewBox="0 0 17 17"><rect x="1" y="6.500" width="4.500" height="10" rx="1" fill="#f5a623" stroke="#c77c0a" stroke-width="0.600"/><rect x="6" y="1" width="4.500" height="15.500" rx="1" fill="#4a90d9" stroke="#2a64a8" stroke-width="0.600"/><rect x="11" y="4" width="4.500" height="12.500" rx="1" fill="#e03a2a" stroke="#a8221a" stroke-width="0.600"/><path d="M2.500 8V15M7.500 3V15M12.500 6V15" stroke="#fff" stroke-width="0.800" opacity="0.600"/></svg>
<div class="t" style="left:408px;top:952px;font-size:8px;letter-spacing:-0.15px">Persp.</div><div class="panel" id="props" style="left:1111px;top:86px;width:174px;height:884px">
<div class="tabrow"></div>
<div class="tab sel" style="left:0;width:138px"><div class="tabt" style="left:4px;font-size:11.4px;letter-spacing:0.15px">Chicken - Properties</div></div>
<svg style="left:124px;top:6px" width="7" height="7"><use href="#closex"/></svg>
<svg style="left:157px;top:6px" width="10" height="9"><use href="#minbtn"/></svg>
<div class="a" style="left:0;top:20px;width:172px;height:18px;background:#d6d6d6"></div>
<svg style="left:2px;top:24px" width="9" height="9" viewBox="0 0 9 9"><rect x="0.500" y="0.500" width="8" height="8" fill="#fff" stroke="#8a8a8a"/><path d="M2 4.500H7" stroke="#444"/></svg>
<div class="pn" style="left:13px;top:22px">Spatial</div>
<div class="ln" style="top:55px"></div>
<div class="pn" style="top:40px">Vertexes</div>
<div class="pv" style="top:40px">307</div>
<div class="ln" style="top:73px"></div>
<div class="pn" style="top:58px">Triangles</div>
<div class="pv" style="top:58px">430</div>
<div class="ln" style="top:91px"></div>
<div class="pn" style="top:76px">World Translation</div>
<div class="pv" style="top:76px">[0.0, 0.0, 0.0]</div>
<div class="ln" style="top:109px"></div>
<div class="pn" style="top:94px">World Rotation</div>
<div class="pv" style="top:94px">[0.0, 0.0, 0.0]</div>
<div class="ln" style="top:127px"></div>
<div class="pn" style="top:112px">World Scale</div>
<div class="pv" style="top:112px">[1.0, 1.0, 1.0]</div>
<div class="ln" style="top:145px"></div>
<div class="pn" style="top:130px">Local Translation</div>
<div class="pv e" style="top:129px">[0.0, 0.0, 0.0]</div>
<div class="ln" style="top:163px"></div>
<div class="pn" style="top:148px">Local Rotation</div>
<div class="pv e" style="top:147px">[0.0, 0.0, 0.0]</div>
<div class="ln" style="top:181px"></div>
<div class="pn" style="top:166px">Local Scale</div>
<div class="pv e" style="top:165px">[1.0, 1.0, 1.0]</div>
<div class="ln" style="top:199px"></div>
<div class="pn" style="top:184px">World Bound</div>
<div class="pv" style="top:184px">(No Property E...</div>
<div class="ln" style="top:217px"></div>
<div class="pn" style="top:202px">Cull Hint</div>
<div class="cmb" style="top:200px">Dynamic<i></i></div>
<div class="ln" style="top:235px"></div>
<div class="pn" style="top:220px">Local Cull Hint</div>
<div class="cmb dis" style="top:218px">Inherit<i></i></div>
<div class="ln" style="top:253px"></div>
<div class="pn" style="top:238px">Shadow Mode</div>
<div class="cmb" style="top:236px">Off<i></i></div>
<div class="ln" style="top:271px"></div>
<div class="pn" style="top:256px">Local Shadow Mode</div>
<div class="cmb dis" style="top:254px">Inherit<i></i></div>
<div class="ln" style="top:289px"></div>
<div class="pn" style="top:274px">World Light List</div>
<div class="pv" style="top:274px">(No Property E...</div>
<div class="ln" style="top:307px"></div>
<div class="pn" style="top:292px">Queue Bucket</div>
<div class="cmb" style="top:290px">Opaque<i></i></div>
<div class="a" style="left:0;top:308px;width:172px;height:18px;background:#d6d6d6"></div>
<svg style="left:2px;top:312px" width="9" height="9" viewBox="0 0 9 9"><rect x="0.500" y="0.500" width="8" height="8" fill="#fff" stroke="#8a8a8a"/><path d="M2 4.500H7" stroke="#444"/></svg>
<div class="pn" style="left:13px;top:310px">Geometry</div>
<div class="ln" style="top:343px"></div>
<div class="pn" style="top:328px">Lod Level</div>
<div class="pv e" style="top:327px">0</div>
<div class="ln" style="top:361px"></div>
<div class="pn" style="top:346px">Material</div>
<div class="cmb" style="top:344px;width:70px">models...<i></i></div>
<div class="a" style="left:157px;top:344px;width:14px;height:17px;border:1px solid #6a6a6a;border-radius:3px;background:linear-gradient(#fdfdfd,#e2e2e2);font-size:10px;line-height:17px;text-align:center;letter-spacing:0">...</div>
<div class="ln" style="top:379px"></div>
<div class="pn" style="top:364px">Mesh</div>
<div class="pv" style="top:364px">(No Property E...</div>
<div class="a" style="left:85px;top:38px;width:1px;height:270px;background:#e2e2e2"></div>
<div class="a" style="left:85px;top:326px;width:1px;height:54px;background:#e2e2e2"></div>
<div class="a" style="left:0;top:722px;width:172px;height:5px;background:#ebebeb"></div>
<div class="a" style="left:0;top:727px;width:172px;height:1px;background:#8b8b8b"></div>
<div class="a" style="left:0;top:728px;width:172px;height:154px;background:#f0f0f0"></div>
<div class="t" style="left:2px;top:735px;font-weight:bold;font-size:11.3px;letter-spacing:0.15px">Chicken</div>
<svg style="left:151px;top:733px" width="16" height="16" viewBox="0 0 16 16"><circle cx="8" cy="8" r="7.500" fill="#939393"/><path d="M5.800 6 Q5.800 3.500 8 3.500 Q10.300 3.500 10.300 5.700 Q10.300 7 8.200 8.200 V9.800 M8.200 11.300 V12.800" stroke="#ababab" stroke-width="1.500" fill="none"/></svg>
</div><svg style="left:12px;top:980px" width="12" height="11" viewBox="0 0 12 11"><rect x="4.500" y="0.500" width="7" height="6" fill="#f4f4f4" stroke="#222"/><path d="M4.500 1.500H11.500" stroke="#222" stroke-width="1.500"/><rect x="0.500" y="4.500" width="7" height="6" fill="#f4f4f4" stroke="#222"/><path d="M0.500 5.500H7.500" stroke="#222" stroke-width="1.500"/></svg>
<svg style="left:32px;top:978px" width="17" height="15" viewBox="0 0 17 15"><rect x="0.500" y="0.500" width="14" height="12" fill="#fdfdfd" stroke="#6b87ad"/><rect x="1" y="1" width="13" height="2.500" fill="#9fb6d6"/><path d="M7 7 L8 5 L9.500 7 H13 L14.500 5 L15.500 7 Q17 10 15.500 13 Q11 15.500 7 13 Q5.500 10 7 7Z" fill="#f3c060" stroke="#c98a1e" stroke-width="0.700"/><path d="M9 10.500 H13.500" stroke="#a86a10" stroke-width="0.800"/></svg>
<div class="bt" style="left:52px;letter-spacing:0.15px">Output</div>
<svg style="left:96px;top:978px" width="17" height="15" viewBox="0 0 17 15"><path d="M8.500 0.800 L16 7.500 L8.500 14.200 L1 7.500Z" fill="#7fd04a" stroke="#3d8a1c"/><path d="M8.500 2.500 L13.500 7 H3.500Z" fill="#c5efa0"/></svg>
<div class="bt" style="left:117px">Variables</div>
<svg style="left:172px;top:976px" width="20" height="20" viewBox="0 0 22 21"><rect x="1" y="1.500" width="19" height="14" rx="1" fill="#6fb23c" stroke="#dfe8df"/><path d="M1.500 2 H12 L8 8 H1.500Z" fill="#8ec5f0"/><path d="M8 10 L17 3 L19 5 L11 12Z" fill="#f4f6ee"/><path d="M3 16 L7 11.500 L11 16 L10 19 H4Z" fill="#9a5a28"/><path d="M1 19.500 L14 17" stroke="#6fb23c" stroke-width="2"/></svg>
<div class="bt" style="left:197px;letter-spacing:-0.33px">SceneComposer Window</div>
<div class="a" style="left:328px;top:980px;width:10px;height:10px;border:1px solid #c24a4a;background:#f3a3a3"></div>
<div class="bt" style="left:346px">Breakpoints</div>
<div class="a" id="bline"></div>
<div class="a" style="left:1200px;top:1007px;width:1px;height:14px;background:#a8a8a8"></div><div class="a" style="left:1262px;top:1007px;width:1px;height:14px;background:#a8a8a8"></div>
<div class="t" style="left:1267px;top:1007px;font-size:10.5px">INS</div>
<div class="a" id="bblack"></div>
</body></html>
